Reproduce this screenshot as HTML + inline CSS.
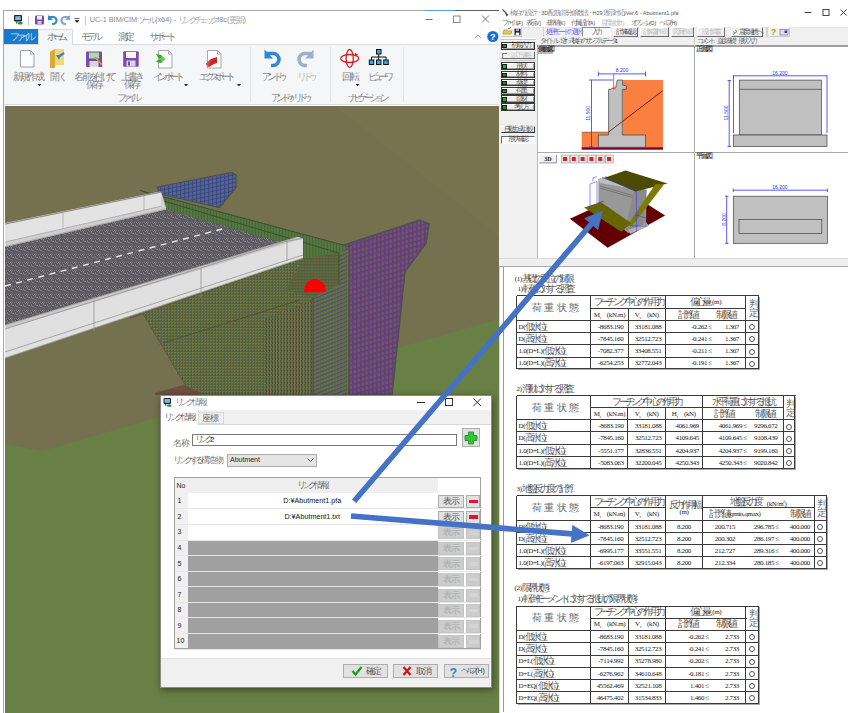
<!DOCTYPE html><html><head><meta charset="utf-8"><style>
*{box-sizing:border-box}
html,body{margin:0;padding:0}
body{width:850px;height:713px;position:relative;overflow:hidden;background:#fff;font-family:"Liberation Sans",sans-serif}
.a{position:absolute}
.t{position:absolute;white-space:nowrap}
.t i{display:inline-block;text-align:center;font-style:normal;vertical-align:top;line-height:inherit;opacity:.7;letter-spacing:0;font-family:"Liberation Sans",sans-serif}
svg{position:absolute;left:0;top:0}
</style></head><body>
<div class="a" style="left:3px;top:10px;width:496px;height:703px;background:#fff;border-left:1px solid #a8a8a8;border-top:1px solid #a8a8a8"></div>
<div class="a" style="left:426px;top:10px;width:29px;height:1px;background:#5a9ae0"></div>
<div class="a" style="left:455px;top:10px;width:44px;height:1px;background:#606060"></div>
<div class="a" style="left:4px;top:29px;width:34.5px;height:14.5px;background:#1979ca"></div>
<div class="t" style="left:1.0px;width:40px;text-align:center;top:30.8px;line-height:11px;font-size:8px;color:#fff;"><i style="width:5.4px;font-size:9.5px">フ</i><i style="width:5.4px;font-size:9.5px">ァ</i><i style="width:5.4px;font-size:9.5px">イ</i><i style="width:5.4px;font-size:9.5px">ル</i></div>
<div class="a" style="left:38px;top:29px;width:35px;height:16px;background:#f5f6f7;border:1px solid #dadbdc;border-bottom:none"></div>
<div class="t" style="left:35.5px;width:40px;text-align:center;top:31.0px;line-height:11px;font-size:8px;color:#444;"><i style="width:5.9px;font-size:9.5px">ホ</i><i style="width:5.9px;font-size:9.5px">ー</i><i style="width:5.9px;font-size:9.5px">ム</i></div>
<div class="t" style="left:70.0px;width:40px;text-align:center;top:31.0px;line-height:11px;font-size:8px;color:#444;"><i style="width:5.9px;font-size:9.5px">モ</i><i style="width:5.9px;font-size:9.5px">デ</i><i style="width:5.9px;font-size:9.5px">ル</i></div>
<div class="t" style="left:105.0px;width:40px;text-align:center;top:31.0px;line-height:11px;font-size:8px;color:#444;"><i style="width:7.3px;font-size:9.5px">測</i><i style="width:7.3px;font-size:9.5px">定</i></div>
<div class="t" style="left:136.0px;width:50px;text-align:center;top:31.0px;line-height:11px;font-size:8px;color:#444;"><i style="width:5.9px;font-size:9.5px">サ</i><i style="width:5.9px;font-size:9.5px">ポ</i><i style="width:5.9px;font-size:9.5px">ー</i><i style="width:5.9px;font-size:9.5px">ト</i></div>
<div class="a" style="left:4px;top:44px;width:495px;height:61px;background:#f5f6f7;border-top:1px solid #dadbdc;border-bottom:1px solid #dadbdc"></div>
<div class="a" style="left:39px;top:44px;width:33px;height:1px;background:#f5f6f7"></div>
<div class="a" style="left:250px;top:47px;width:1px;height:55px;background:#e2e3e5"></div>
<div class="a" style="left:330px;top:47px;width:1px;height:55px;background:#e2e3e5"></div>
<div class="a" style="left:403px;top:47px;width:1px;height:55px;background:#e2e3e5"></div>
<div class="t" style="left:-7.8px;width:70px;text-align:center;top:70.5px;line-height:11px;font-size:8px;color:#555;"><i style="width:7.3px;font-size:9.5px">新</i><i style="width:7.3px;font-size:9.5px">規</i><i style="width:7.3px;font-size:9.5px">作</i><i style="width:7.3px;font-size:9.5px">成</i></div>
<div class="t" style="left:21.6px;width:70px;text-align:center;top:70.5px;line-height:11px;font-size:8px;color:#555;"><i style="width:7.3px;font-size:9.5px">開</i><i style="width:5.4px;font-size:9.5px">く</i></div>
<div class="t" style="left:58.5px;width:70px;text-align:center;top:70.5px;line-height:11px;font-size:8px;color:#555;"><i style="width:7.3px;font-size:9.5px">名</i><i style="width:7.3px;font-size:9.5px">前</i><i style="width:5.4px;font-size:9.5px">を</i><i style="width:7.3px;font-size:9.5px">付</i><i style="width:5.4px;font-size:9.5px">け</i><i style="width:5.4px;font-size:9.5px">て</i></div>
<div class="t" style="left:95.8px;width:70px;text-align:center;top:70.5px;line-height:11px;font-size:8px;color:#555;"><i style="width:7.3px;font-size:9.5px">上</i><i style="width:7.3px;font-size:9.5px">書</i><i style="width:5.4px;font-size:9.5px">き</i></div>
<div class="t" style="left:131.5px;width:70px;text-align:center;top:70.5px;line-height:11px;font-size:8px;color:#555;"><i style="width:5.4px;font-size:9.5px">イ</i><i style="width:5.4px;font-size:9.5px">ン</i><i style="width:5.4px;font-size:9.5px">ポ</i><i style="width:5.4px;font-size:9.5px">ー</i><i style="width:5.4px;font-size:9.5px">ト</i></div>
<div class="t" style="left:180.4px;width:70px;text-align:center;top:70.5px;line-height:11px;font-size:8px;color:#555;"><i style="width:5.4px;font-size:9.5px">エ</i><i style="width:5.4px;font-size:9.5px">ク</i><i style="width:5.4px;font-size:9.5px">ス</i><i style="width:5.4px;font-size:9.5px">ポ</i><i style="width:5.4px;font-size:9.5px">ー</i><i style="width:5.4px;font-size:9.5px">ト</i></div>
<div class="t" style="left:237.8px;width:70px;text-align:center;top:70.5px;line-height:11px;font-size:8px;color:#555;"><i style="width:5.4px;font-size:9.5px">ア</i><i style="width:5.4px;font-size:9.5px">ン</i><i style="width:5.4px;font-size:9.5px">ド</i><i style="width:5.4px;font-size:9.5px">ゥ</i></div>
<div class="t" style="left:270.5px;width:70px;text-align:center;top:70.5px;line-height:11px;font-size:8px;color:#a8a8a8;"><i style="width:5.4px;font-size:9.5px">リ</i><i style="width:5.4px;font-size:9.5px">ド</i><i style="width:5.4px;font-size:9.5px">ゥ</i></div>
<div class="t" style="left:314.5px;width:70px;text-align:center;top:70.5px;line-height:11px;font-size:8px;color:#555;"><i style="width:7.3px;font-size:9.5px">回</i><i style="width:7.3px;font-size:9.5px">転</i></div>
<div class="t" style="left:343.6px;width:70px;text-align:center;top:70.5px;line-height:11px;font-size:8px;color:#555;"><i style="width:5.4px;font-size:9.5px">ビ</i><i style="width:5.4px;font-size:9.5px">ュ</i><i style="width:5.4px;font-size:9.5px">ー</i><i style="width:5.4px;font-size:9.5px">ワ</i></div>
<div class="t" style="left:73.5px;width:40px;text-align:center;top:79.1px;line-height:11px;font-size:8px;color:#555;"><i style="width:7.3px;font-size:9.5px">保</i><i style="width:7.3px;font-size:9.5px">存</i></div>
<div class="t" style="left:110.8px;width:40px;text-align:center;top:79.1px;line-height:11px;font-size:8px;color:#555;"><i style="width:7.3px;font-size:9.5px">保</i><i style="width:7.3px;font-size:9.5px">存</i></div>
<div class="t" style="left:97.0px;width:60px;text-align:center;top:91.8px;line-height:11px;font-size:8px;color:#666;"><i style="width:5.2px;font-size:9.5px">フ</i><i style="width:5.2px;font-size:9.5px">ァ</i><i style="width:5.2px;font-size:9.5px">イ</i><i style="width:5.2px;font-size:9.5px">ル</i></div>
<div class="t" style="left:249.2px;width:80px;text-align:center;top:91.8px;line-height:11px;font-size:8px;color:#666;"><i style="width:5px;font-size:9.5px">ア</i><i style="width:5px;font-size:9.5px">ン</i><i style="width:5px;font-size:9.5px">ド</i><i style="width:5px;font-size:9.5px">ゥ</i>/<i style="width:5px;font-size:9.5px">リ</i><i style="width:5px;font-size:9.5px">ド</i><i style="width:5px;font-size:9.5px">ゥ</i></div>
<div class="t" style="left:326.3px;width:80px;text-align:center;top:91.8px;line-height:11px;font-size:8px;color:#666;"><i style="width:5.35px;font-size:9.5px">ナ</i><i style="width:5.35px;font-size:9.5px">ビ</i><i style="width:5.35px;font-size:9.5px">ゲ</i><i style="width:5.35px;font-size:9.5px">ー</i><i style="width:5.35px;font-size:9.5px">シ</i><i style="width:5.35px;font-size:9.5px">ョ</i><i style="width:5.35px;font-size:9.5px">ン</i></div>
<div class="t" style="left:89.7px;top:15.2px;line-height:10.3px;font-size:7.3px;color:#888;">UC-1 BIM/CIM<i style="width:5.3px;font-size:9px">ツ</i><i style="width:5.3px;font-size:9px">ー</i><i style="width:5.3px;font-size:9px">ル</i> (x64) - <i style="width:5.3px;font-size:9px">リ</i><i style="width:5.3px;font-size:9px">ン</i><i style="width:5.3px;font-size:9px">ク</i><i style="width:5.3px;font-size:9px">チ</i><i style="width:5.3px;font-size:9px">ェ</i><i style="width:5.3px;font-size:9px">ッ</i><i style="width:5.3px;font-size:9px">ク</i>.f8c(<i style="width:7px;font-size:9px">更</i><i style="width:7px;font-size:9px">新</i>)</div>
<svg width="850" height="713" viewBox="0 0 850 713" style="z-index:1">
<g>
<rect x="14" y="15" width="8" height="6.5" rx="1" fill="#222"/><rect x="15.2" y="16.2" width="5.6" height="3.8" fill="#7fb5e8"/>
<rect x="16" y="21.5" width="1.5" height="2" fill="#555"/><rect x="18" y="22" width="4.5" height="2.5" rx="1" fill="#1a9a2a"/>
<rect x="28" y="16" width="1" height="9" fill="#c8c8c8"/>
<rect x="35" y="15.5" width="9" height="9" rx="1" fill="#7a4ab0"/><rect x="37" y="16" width="5" height="3.5" fill="#eee"/><rect x="37.5" y="21" width="4" height="3" fill="#ccc"/>
<path d="M49 17 h4 a3.5 3.5 0 0 1 0 7 h-1" stroke="#2a8ad8" stroke-width="2.2" fill="none"/><path d="M48 15 v5 h5z" fill="#2a8ad8"/>
<path d="M69 17 h-4 a3.5 3.5 0 0 0 0 7 h1" stroke="#8aa4c8" stroke-width="2.2" fill="none"/><path d="M70 15 v5 h-5z" fill="#8aa4c8"/>
<path d="M74.5 18.5 h5" stroke="#333" stroke-width=".8"/><path d="M74.5 20 h5 l-2.5 3z" fill="#333"/>
<rect x="85" y="16" width="1" height="9" fill="#c8c8c8"/>
<path d="M425.5 19.5 h7" stroke="#777" stroke-width="1"/>
<rect x="453.5" y="16" width="6.5" height="6.5" fill="none" stroke="#888" stroke-width="1"/>
<path d="M482 15.5 l7 7 M489 15.5 l-7 7" stroke="#777" stroke-width="1"/>
<path d="M475 38 l3 -3 l3 3" stroke="#999" stroke-width="1" fill="none"/>
<circle cx="492.8" cy="36.5" r="5.6" fill="#1a6fcf"/><text x="492.8" y="40" font-size="9" font-weight="bold" fill="#fff" text-anchor="middle" font-family="Liberation Sans">?</text>
</g>
<g>
<path d="M20.5 50.5 h10 l3.5 3.5 v13 h-13.5z" fill="#fcfcfc" stroke="#a0a0a0"/><path d="M30.5 50.5 v3.5 h3.5" fill="none" stroke="#a0a0a0"/>
<path d="M50 52 l5 -3 v16 l-5 3z" fill="#e8c35a"/><path d="M55 49 h9 v16 h-9z" fill="#f3d77a"/><path d="M50 52 l5-3 v19 l-5 0z" fill="#d9a93a"/>
<path d="M64 53 l-6 4" stroke="#2a8ad8" stroke-width="2.2"/><path d="M56 55 l3 5 l2 -5z" fill="#2a8ad8"/>
<rect x="86" y="51.5" width="16" height="15.5" rx="1" fill="#7a4ab0"/><rect x="89" y="52.5" width="10" height="6" fill="#a8e0a0"/><rect x="89.5" y="61" width="9" height="6" fill="#d8d8d8"/><path d="M95 57 l7 8" stroke="#c89a40" stroke-width="1.6"/><path d="M101.5 64.5 l1 2.5 l-2.3 -1z" fill="#e33"/>
<rect x="123.2" y="51.2" width="15.5" height="15.5" rx="1" fill="#7a4ab0"/><rect x="126" y="52" width="10" height="6" fill="#f4f4f4"/><rect x="126.5" y="60.5" width="9" height="6" fill="#d8d8d8"/><rect x="128" y="61.5" width="2" height="4" fill="#7a4ab0"/>
<path d="M158.5 50.5 h10 l3.5 3.5 v14 h-13.5z" fill="#fcfcfc" stroke="#a8a8a8"/><path d="M168.5 50.5 v3.5 h3.5" fill="none" stroke="#a8a8a8"/>
<path d="M156 54 l5 1 l4 4 l-4 4 l-5 -1 l3 -3z" fill="#3aa03a"/><path d="M161 55 l4 4 l-4 4 v-3 h-3 v-2 h3z" fill="#6acb4a"/>
<path d="M207.5 50.5 h10 l3.5 3.5 v14 h-13.5z" fill="#fcfcfc" stroke="#a8a8a8"/><path d="M217.5 50.5 v3.5 h3.5" fill="none" stroke="#a8a8a8"/>
<path d="M217 57 l-6 2 l-5 5 l3 3 l5 -3 l3 -1z" fill="#c82828"/><path d="M211 59 l-5 5 l3 3 z" fill="#e04040"/>
<path d="M267 53.5 h6 a6 6 0 0 1 0 12 h-2" stroke="#2a8ad8" stroke-width="3.6" fill="none"/><path d="M264.5 49.5 v9 h8.5z" fill="#2a8ad8"/>
<path d="M311 53.5 h-6 a6 6 0 0 0 0 12 h2" stroke="#9ab0cc" stroke-width="3.6" fill="none"/><path d="M313.5 49.5 v9 h-8.5z" fill="#9ab0cc"/>
<ellipse cx="349.7" cy="58.5" rx="9" ry="4" fill="none" stroke="#d82020" stroke-width="1.3"/><ellipse cx="349.7" cy="58.5" rx="3.6" ry="9" fill="none" stroke="#d82020" stroke-width="1.3"/><path d="M355 53 l3 1.5 l-3 2z" fill="#d82020"/>
<rect x="376.5" y="49.5" width="4.5" height="4.5" fill="#3aa8e8" stroke="#111" stroke-width="1"/>
<path d="M378.7 54 v3 M371.5 60 v-3 h14.5 v3 M378.7 57 v3" stroke="#111" stroke-width="1" fill="none"/>
<rect x="369.3" y="60" width="4.5" height="4.5" fill="#3aa8e8" stroke="#111" stroke-width="1"/><rect x="376.5" y="60" width="4.5" height="4.5" fill="#3aa8e8" stroke="#111" stroke-width="1"/><rect x="383.7" y="60" width="4.5" height="4.5" fill="#3aa8e8" stroke="#111" stroke-width="1"/>
<path d="M37.5 84 h4 l-2 2.2z M184 84 h4 l-2 2.2z M237 84 h4 l-2 2.2z M355.5 84 h4 l-2 2.2z" fill="#222"/>
</g></svg>
<svg width="850" height="713" viewBox="0 0 850 713"><defs>
<clipPath id="vc"><rect x="5" y="106" width="494" height="607"/></clipPath>
<pattern id="gB" width="4" height="4" patternUnits="userSpaceOnUse" patternTransform="skewY(-12)"><rect width="4" height="4" fill="#4f6a78"/><path d="M0 0H4M0 0V4" stroke="#3a3a98" stroke-width="1.3"/></pattern>
<pattern id="gG" width="3" height="4" patternUnits="userSpaceOnUse" patternTransform="skewY(15)"><rect width="3" height="4" fill="#53773f"/><path d="M0 0V4" stroke="#3e5a30" stroke-width="1"/></pattern>
<pattern id="gF" width="3" height="3" patternUnits="userSpaceOnUse"><rect width="3" height="3" fill="#5c663e"/><rect x="0" width="1" height="3" fill="#767243"/><rect x="1" y="1" width="1" height="1" fill="#5c8a3c"/><rect x="2" y="2" width="1" height="1" fill="#4e5450"/><rect x="0" y="0" width="3" height=".6" fill="#525a3a"/></pattern>
<pattern id="gR" width="3" height="4" patternUnits="userSpaceOnUse"><rect width="3" height="4" fill="#56603c"/><rect x="0" width="1" height="4" fill="#777243"/><rect x="1" y="1" width="1.5" height="1" fill="#a03844"/><rect x="2" y="2" width="1" height="2" fill="#474b4c"/><rect x="1" y="3" width="1" height="1" fill="#5a7a3a"/></pattern>
<pattern id="gS" width="3" height="4" patternUnits="userSpaceOnUse" patternTransform="skewY(-22)"><rect width="3" height="4" fill="#4f7a3c"/><path d="M0 1.5H3" stroke="#6a3a86" stroke-width="1.3"/><rect x="0" y="2.5" width="1" height="1.5" fill="#7a7040"/></pattern>
<pattern id="gP" width="4" height="5" patternUnits="userSpaceOnUse" patternTransform="skewY(-16)"><rect width="4" height="5" fill="#5f6442"/><path d="M0 0.7H4M0.7 0V5" stroke="#67398a" stroke-width="1.5"/><rect x="2" y="2" width="1" height="1" fill="#8a4068"/></pattern>
<pattern id="asph" width="8" height="8" patternUnits="userSpaceOnUse"><rect width="8" height="8" fill="#615d65"/><rect x="0" y="0" width="1" height="1" fill="#4f4c53"/><rect x="1" y="0" width="1" height="1" fill="#555259"/><rect x="3" y="0" width="1" height="1" fill="#77737b"/><rect x="7" y="0" width="1" height="1" fill="#817d85"/><rect x="4" y="1" width="1" height="1" fill="#817d85"/><rect x="5" y="1" width="1" height="1" fill="#817d85"/><rect x="7" y="1" width="1" height="1" fill="#77737b"/><rect x="0" y="2" width="1" height="1" fill="#817d85"/><rect x="1" y="2" width="1" height="1" fill="#77737b"/><rect x="3" y="2" width="1" height="1" fill="#555259"/><rect x="3" y="3" width="1" height="1" fill="#77737b"/><rect x="5" y="3" width="1" height="1" fill="#555259"/><rect x="5" y="4" width="1" height="1" fill="#555259"/><rect x="3" y="5" width="1" height="1" fill="#6e6a72"/><rect x="0" y="6" width="1" height="1" fill="#817d85"/><rect x="1" y="6" width="1" height="1" fill="#4f4c53"/><rect x="2" y="6" width="1" height="1" fill="#817d85"/><rect x="4" y="6" width="1" height="1" fill="#77737b"/><rect x="6" y="6" width="1" height="1" fill="#6e6a72"/><rect x="1" y="7" width="1" height="1" fill="#817d85"/><rect x="3" y="7" width="1" height="1" fill="#817d85"/><rect x="7" y="7" width="1" height="1" fill="#4f4c53"/></pattern>
<pattern id="gFt" width="3" height="3" patternUnits="userSpaceOnUse"><rect width="3" height="3" fill="#6a5242"/><path d="M0 0H3" stroke="#8a3a38" stroke-width=".8"/></pattern>
<pattern id="gT" width="3" height="3" patternUnits="userSpaceOnUse"><rect width="3" height="3" fill="#566b3e"/><path d="M0 0H3" stroke="#46553a" stroke-width=".8"/><rect x="1" y="1" width="1" height="1" fill="#8a4048"/></pattern>
</defs><g clip-path="url(#vc)"><polygon points="5,106 499,106 499,713 5,713" fill="#75714e" /><polygon points="335,106 499,106 499,236" fill="#77734f" /><polygon points="5,444 42,451 499,319 499,713 5,713" fill="#688046" /><polygon points="157,187 232,172.5 236,175 236,187.5 219.5,207.5 160,194" fill="url(#gB)" stroke="#4f4f4f" stroke-width="1.2"/><polygon points="130,318 303,258 313,300 313,395 190,395 155,393.3 185.2,385 143.1,314" fill="url(#gF)" stroke="#55583e" stroke-width=".8"/><path d="M163 343 L300 300" stroke="#4a4f38" stroke-width=".8"/><path d="M160 312 V345" stroke="#5050a0" stroke-width="1" stroke-dasharray="1.5 2.5"/><polygon points="155,393.3 185.2,385.5 200,392 200,395 155,395" fill="url(#gFt)" /><polygon points="265,318 313,300 313,395 265,395" fill="url(#gR)" /><polygon points="140,190 345,245 350,248 339,253 339,285 313,298 303,258 166,209.5" fill="url(#gG)" /><path d="M140 190.5 L345 245.5 M150 197 L339 253" stroke="#3f4a35" stroke-width=".9" fill="none"/><polygon points="286,290 303,258 339,253 339,285 313,298" fill="url(#gT)" /><polygon points="313,298 339,285 339,253 350,247 350,395 313,395" fill="url(#gS)" /><path d="M313 298 V395" stroke="#4a4a3a" stroke-width="1"/><path d="M347.5 250 V395" stroke="#6e6a48" stroke-width="1.2"/><path d="M339 253 V285" stroke="#3f4a35" stroke-width=".8"/><polygon points="344,245 420,220 429,224 426,243.5 405,271.5 392,395 349,395 349,247" fill="url(#gP)" stroke="#505050" stroke-width="1.5"/><polygon points="5,247 166,209.5 286,243.5 5,325" fill="url(#asph)" /><path d="M5 286 L226 228" stroke="#e8e8e8" stroke-width="1.4" stroke-dasharray="6 5.5"/><polygon points="5,223 160,191.5 161.5,193 166,207.5 166,209.5 5,247" fill="#cfcfcf" /><polygon points="5,225 161,193 161,206 5,241.7" fill="#e3e3e3" /><path d="M5 224 L161 192" stroke="#8c8c8c" stroke-width="1"/><path d="M5 242 L161 206.3" stroke="#a8a8a8" stroke-width=".8"/><path d="M5 246.5 L166 209" stroke="#9a9a9a" stroke-width=".7"/><path d="M63 213 V229 M144 196 V210" stroke="#a0a0a0" stroke-width=".6"/><polygon points="5,325 297,237 303,238.5 303,258 5,358" fill="#e0e0e0" /><polygon points="5,325 297,237 303,238.5 5,329" fill="#c9c9c9" /><path d="M5 325 L297 237 M5 329 L287 241 L303 238.5 M5 352 L303 255 M287 241 V261 M94 300 V331 M201 268 V298" stroke="#8a8a8a" stroke-width=".7" fill="none"/><path d="M5 358 L303 258" stroke="#9a9a9a" stroke-width=".8"/><path d="M304 292 A11 13 0 0 1 326 292 Z" fill="#f00"/><path d="M305 293 h20" stroke="#e02020" stroke-width="1.2" stroke-dasharray="1.5 1.5"/></g></svg>
<div class="a" style="left:499px;top:0px;width:351px;height:713px;background:#fff"></div>
<div class="a" style="left:499px;top:37px;width:1px;height:676px;background:#d8d8d8"></div>
<div class="t" style="left:509.5px;top:8.6px;line-height:8.5px;font-size:5.5px;color:#555;"><i style="width:5.3px;font-size:7px">橋</i><i style="width:5.3px;font-size:7px">台</i><i style="width:5.3px;font-size:7px">の</i><i style="width:5.3px;font-size:7px">設</i><i style="width:5.3px;font-size:7px">計</i><i style="width:5.3px;font-size:7px">・</i>3D<i style="width:5.3px;font-size:7px">配</i><i style="width:5.3px;font-size:7px">筋</i>(<i style="width:5.3px;font-size:7px">部</i><i style="width:5.3px;font-size:7px">分</i><i style="width:5.3px;font-size:7px">係</i><i style="width:5.3px;font-size:7px">数</i><i style="width:5.3px;font-size:7px">法</i><i style="width:5.3px;font-size:7px">・</i>H29<i style="width:5.3px;font-size:7px">道</i><i style="width:5.3px;font-size:7px">示</i><i style="width:5.3px;font-size:7px">対</i><i style="width:5.3px;font-size:7px">応</i>)Ver.6 - Abutment1.pfa</div>
<div class="t" style="left:501.8px;top:18.5px;line-height:8px;font-size:5px;color:#444;"><i style="width:3.7px;font-size:6.5px">フ</i><i style="width:3.7px;font-size:6.5px">ァ</i><i style="width:3.7px;font-size:6.5px">イ</i><i style="width:3.7px;font-size:6.5px">ル</i>(F)</div>
<div class="t" style="left:525.7px;top:18.5px;line-height:8px;font-size:5px;color:#444;"><i style="width:4.3px;font-size:6.5px">表</i><i style="width:4.3px;font-size:6.5px">示</i>(V)</div>
<div class="t" style="left:545.8px;top:18.5px;line-height:8px;font-size:5px;color:#444;"><i style="width:4.3px;font-size:6.5px">基</i><i style="width:4.3px;font-size:6.5px">準</i><i style="width:4.3px;font-size:6.5px">値</i>(K)</div>
<div class="t" style="left:571.2px;top:18.5px;line-height:8px;font-size:5px;color:#444;"><i style="width:4.3px;font-size:6.5px">付</i><i style="width:4.3px;font-size:6.5px">属</i><i style="width:4.3px;font-size:6.5px">設</i><i style="width:4.3px;font-size:6.5px">計</i>(A)</div>
<div class="t" style="left:600.9px;top:18.5px;line-height:8px;font-size:5px;color:#aaa;"><i style="width:4.3px;font-size:6.5px">震</i><i style="width:4.3px;font-size:6.5px">度</i><i style="width:4.3px;font-size:6.5px">連</i><i style="width:4.3px;font-size:6.5px">携</i>(T)</div>
<div class="t" style="left:630.5px;top:18.5px;line-height:8px;font-size:5px;color:#444;"><i style="width:3.7px;font-size:6.5px">オ</i><i style="width:3.7px;font-size:6.5px">プ</i><i style="width:3.7px;font-size:6.5px">シ</i><i style="width:3.7px;font-size:6.5px">ョ</i><i style="width:3.7px;font-size:6.5px">ン</i>(O)</div>
<div class="t" style="left:659px;top:18.5px;line-height:8px;font-size:5px;color:#444;"><i style="width:3.7px;font-size:6.5px">ヘ</i><i style="width:3.7px;font-size:6.5px">ル</i><i style="width:3.7px;font-size:6.5px">プ</i>(H)</div>
<div class="a" style="left:499px;top:26.5px;width:349px;height:10.5px;background:#f0f0f0;border-top:1px solid #e6e6e6"></div>
<div class="a" style="left:501px;top:27.3px;width:21px;height:9.4px;border:1px solid #fff;border-right-color:#c8c8c8;border-bottom-color:#c8c8c8"></div>
<div class="a" style="left:542.5px;top:27.3px;width:1.5px;height:9.4px;background:#d4d4d4"></div>
<div class="t" style="left:545.5px;top:27.8px;line-height:8.5px;font-size:5.5px;color:#2a2af0;"><i style="width:4.4px;font-size:6.5px">処</i><i style="width:4.4px;font-size:6.5px">理</i><i style="width:4.4px;font-size:6.5px">モ</i><i style="width:4.4px;font-size:6.5px">ー</i><i style="width:4.4px;font-size:6.5px">ド</i><i style="width:4.4px;font-size:6.5px">の</i><i style="width:4.4px;font-size:6.5px">選</i><i style="width:4.4px;font-size:6.5px">択</i></div>
<div class="a" style="left:581.8px;top:27.3px;width:29px;height:9.4px;background:#fafafa;border:1px solid #8a8a8a;border-right-color:#fff;border-bottom-color:#fff"></div>
<div class="t" style="left:581.2px;width:30px;text-align:center;top:28.0px;line-height:8.5px;font-size:5.5px;color:#222;"><i style="width:4.6px;font-size:6.5px">入</i><i style="width:4.6px;font-size:6.5px">力</i></div>
<div class="a" style="left:612.5px;top:27.3px;width:25.5px;height:9.4px;background:#f0f0f0;border:1px solid #fff;border-right-color:#6a6a6a;border-bottom-color:#6a6a6a"></div>
<div class="t" style="left:605.2px;width:40px;text-align:center;top:28.0px;line-height:8.5px;font-size:5.5px;color:#111;"><i style="width:4.6px;font-size:6.5px">計</i><i style="width:4.6px;font-size:6.5px">算</i><i style="width:4.6px;font-size:6.5px">確</i><i style="width:4.6px;font-size:6.5px">認</i></div>
<div class="a" style="left:639.5px;top:27.3px;width:29.5px;height:9.4px;background:#f0f0f0;border:1px solid #fff;border-right-color:#6a6a6a;border-bottom-color:#6a6a6a"></div>
<div class="t" style="left:634.2px;width:40px;text-align:center;top:28.0px;line-height:8.5px;font-size:5.5px;color:#b0b0b0;"><i style="width:4.6px;font-size:6.5px">計</i><i style="width:4.6px;font-size:6.5px">算</i><i style="width:4.6px;font-size:6.5px">書</i><i style="width:4.6px;font-size:6.5px">作</i><i style="width:4.6px;font-size:6.5px">成</i></div>
<div class="a" style="left:670.6px;top:27.3px;width:23.399999999999977px;height:9.4px;background:#f0f0f0;border:1px solid #fff;border-right-color:#6a6a6a;border-bottom-color:#6a6a6a"></div>
<div class="t" style="left:662.3px;width:40px;text-align:center;top:28.0px;line-height:8.5px;font-size:5.5px;color:#b0b0b0;"><i style="width:4.6px;font-size:6.5px">図</i><i style="width:4.6px;font-size:6.5px">面</i><i style="width:4.6px;font-size:6.5px">作</i><i style="width:4.6px;font-size:6.5px">成</i></div>
<div class="a" style="left:696.5px;top:27.3px;width:28.5px;height:9.4px;background:#f0f0f0;border:1px solid #fff;border-right-color:#6a6a6a;border-bottom-color:#6a6a6a"></div>
<div class="t" style="left:690.8px;width:40px;text-align:center;top:28.0px;line-height:8.5px;font-size:5.5px;color:#b0b0b0;"><i style="width:4.6px;font-size:6.5px">設</i><i style="width:4.6px;font-size:6.5px">計</i><i style="width:4.6px;font-size:6.5px">調</i><i style="width:4.6px;font-size:6.5px">書</i></div>
<div class="a" style="left:730.6px;top:27.3px;width:32.89999999999998px;height:9.4px;background:#f0f0f0;border:1px solid #fff;border-right-color:#6a6a6a;border-bottom-color:#6a6a6a"></div>
<div class="t" style="left:730.0px;width:40px;text-align:center;top:28.0px;line-height:8.5px;font-size:5.5px;color:#222;"><i style="width:4.6px;font-size:6.5px">震</i><i style="width:4.6px;font-size:6.5px">度</i><i style="width:4.6px;font-size:6.5px">連</i><i style="width:4.6px;font-size:6.5px">携</i><i style="width:4.6px;font-size:6.5px">へ</i></div>
<div class="a" style="left:766px;top:27.3px;width:1.5px;height:9.4px;background:#d4d4d4"></div>
<div class="a" style="left:769px;top:27.3px;width:21px;height:9.4px;border:1px solid #fff;border-right-color:#c8c8c8;border-bottom-color:#c8c8c8"></div>
<div class="a" style="left:499px;top:37px;width:37.5px;height:221px;background:#f0f0f0"></div>
<div class="a" style="left:499.5px;top:38px;width:36px;height:2px;border-top:1px solid #fff;border-bottom:1px solid #c8c8c8"></div>
<div class="a" style="left:499.5px;top:60px;width:36px;height:1px;background:#c8c8c8"></div>
<div class="a" style="left:500.5px;top:41.7px;width:34.2px;height:7.899999999999994px;background:#f0f0f0;border:1px solid #3a3a3a;box-shadow:inset 1px 1px 0 #fff, inset -1px -1px 0 #a0a0a0"></div>
<div class="a" style="left:502.3px;top:43.7px;width:4.6px;height:4.6px;background:#0a0;border:1px solid #1a1a1a"></div>
<div class="t" style="left:505.5px;width:30px;text-align:center;top:41.2px;line-height:8.5px;font-size:5.5px;color:#222;"><i style="width:4.6px;font-size:6.5px">初</i><i style="width:4.6px;font-size:6.5px">期</i><i style="width:4.6px;font-size:6.5px">入</i><i style="width:4.6px;font-size:6.5px">力</i></div>
<div class="a" style="left:500.5px;top:51px;width:34.2px;height:7.900000000000001px;background:#f0f0f0;border:1px solid #fafafa;border-right-color:#6a6a6a;border-bottom-color:#6a6a6a"></div>
<div class="a" style="left:502.3px;top:53px;width:4.6px;height:4.6px;border-left:1px solid #777;border-top:1px solid #777"></div>
<div class="t" style="left:505.5px;width:30px;text-align:center;top:50.5px;line-height:8.5px;font-size:5.5px;color:#b4b4b4;"><i style="width:4.6px;font-size:6.5px">以</i><i style="width:4.6px;font-size:6.5px">下</i><i style="width:4.6px;font-size:6.5px">省</i><i style="width:4.6px;font-size:6.5px">略</i></div>
<div class="a" style="left:500.5px;top:62px;width:34.2px;height:7.8px;background:#f0f0f0;border:1px solid #3a3a3a;box-shadow:inset 1px 1px 0 #fff, inset -1px -1px 0 #a0a0a0"></div>
<div class="a" style="left:502.3px;top:64px;width:4.6px;height:4.6px;background:#0c0;border:1px solid #1a1a1a"></div>
<div class="t" style="left:505.5px;width:30px;text-align:center;top:61.5px;line-height:8.5px;font-size:5.5px;color:#222;"><i style="width:4.6px;font-size:6.5px">形</i><i style="width:4.6px;font-size:6.5px">状</i></div>
<div class="a" style="left:500.5px;top:70.7px;width:34.2px;height:7.500000000000003px;background:#f0f0f0;border:1px solid #3a3a3a;box-shadow:inset 1px 1px 0 #fff, inset -1px -1px 0 #a0a0a0"></div>
<div class="a" style="left:502.3px;top:72.7px;width:4.6px;height:4.6px;background:#0a0;border:1px solid #1a1a1a"></div>
<div class="t" style="left:505.5px;width:30px;text-align:center;top:70.1px;line-height:8.5px;font-size:5.5px;color:#222;"><i style="width:4.6px;font-size:6.5px">材</i><i style="width:4.6px;font-size:6.5px">料</i></div>
<div class="a" style="left:500.5px;top:78.6px;width:34.2px;height:7.7000000000000055px;background:#f0f0f0;border:1px solid #3a3a3a;box-shadow:inset 1px 1px 0 #fff, inset -1px -1px 0 #a0a0a0"></div>
<div class="a" style="left:502.3px;top:80.6px;width:4.6px;height:4.6px;background:#0a0;border:1px solid #1a1a1a"></div>
<div class="t" style="left:505.5px;width:30px;text-align:center;top:78.0px;line-height:8.5px;font-size:5.5px;color:#222;"><i style="width:4.6px;font-size:6.5px">基</i><i style="width:4.6px;font-size:6.5px">礎</i></div>
<div class="a" style="left:500.5px;top:86.7px;width:34.2px;height:7.899999999999994px;background:#f0f0f0;border:1px solid #3a3a3a;box-shadow:inset 1px 1px 0 #fff, inset -1px -1px 0 #a0a0a0"></div>
<div class="a" style="left:502.3px;top:88.7px;width:4.6px;height:4.6px;background:#0a0;border:1px solid #1a1a1a"></div>
<div class="t" style="left:505.5px;width:30px;text-align:center;top:86.2px;line-height:8.5px;font-size:5.5px;color:#222;"><i style="width:4.6px;font-size:6.5px">荷</i><i style="width:4.6px;font-size:6.5px">重</i></div>
<div class="a" style="left:500.5px;top:95px;width:34.2px;height:7.899999999999994px;background:#f0f0f0;border:1px solid #3a3a3a;box-shadow:inset 1px 1px 0 #fff, inset -1px -1px 0 #a0a0a0"></div>
<div class="a" style="left:502.3px;top:97px;width:4.6px;height:4.6px;background:#0c0;border:1px solid #1a1a1a"></div>
<div class="t" style="left:505.5px;width:30px;text-align:center;top:94.5px;line-height:8.5px;font-size:5.5px;color:#222;"><i style="width:4.6px;font-size:6.5px">部</i><i style="width:4.6px;font-size:6.5px">材</i></div>
<div class="a" style="left:500.5px;top:103.3px;width:34.2px;height:8.000000000000004px;background:#f0f0f0;border:1px solid #3a3a3a;box-shadow:inset 1px 1px 0 #fff, inset -1px -1px 0 #a0a0a0"></div>
<div class="a" style="left:502.3px;top:105.3px;width:4.6px;height:4.6px;background:#0a0;border:1px solid #1a1a1a"></div>
<div class="t" style="left:505.5px;width:30px;text-align:center;top:102.9px;line-height:8.5px;font-size:5.5px;color:#222;"><i style="width:4.6px;font-size:6.5px">考</i><i style="width:4.6px;font-size:6.5px">え</i><i style="width:4.6px;font-size:6.5px">方</i></div>
<div class="a" style="left:500.5px;top:126px;width:34.2px;height:7px;background:#f0f0f0;border:1px solid #fafafa;border-right-color:#3a3a3a;border-bottom-color:#3a3a3a"></div>
<div class="t" style="left:497.6px;width:40px;text-align:center;top:125.2px;line-height:8.5px;font-size:5.5px;color:#222;"><i style="width:4.4px;font-size:6.5px">自</i><i style="width:4.4px;font-size:6.5px">動</i><i style="width:4.4px;font-size:6.5px">生</i><i style="width:4.4px;font-size:6.5px">成</i>/<i style="width:4.4px;font-size:6.5px">比</i><i style="width:4.4px;font-size:6.5px">較</i></div>
<div class="a" style="left:500.5px;top:135.7px;width:34.2px;height:8px;background:#fafafa;border:1px solid #6a6a6a;border-right-color:#fff;border-bottom-color:#fff"></div>
<div class="t" style="left:497.6px;width:40px;text-align:center;top:135.4px;line-height:8.5px;font-size:5.5px;color:#222;"><i style="width:4.6px;font-size:6.5px">形</i><i style="width:4.6px;font-size:6.5px">状</i><i style="width:4.6px;font-size:6.5px">確</i><i style="width:4.6px;font-size:6.5px">認</i></div>
<div class="a" style="left:536.5px;top:37px;width:311.5px;height:8.5px;background:#f0f0f0"></div>
<div class="a" style="left:536.5px;top:45.3px;width:311.5px;height:1.7px;background:#a0a0a0"></div>
<div class="a" style="left:694px;top:37px;width:1px;height:8.5px;background:#ccc"></div>
<div class="t" style="left:539.7px;top:37.2px;line-height:8.5px;font-size:5.5px;color:#333;"><i style="width:4.3px;font-size:6.5px">タ</i><i style="width:4.3px;font-size:6.5px">イ</i><i style="width:4.3px;font-size:6.5px">ト</i><i style="width:4.3px;font-size:6.5px">ル</i>: <i style="width:4.3px;font-size:6.5px">逆</i>T<i style="width:4.3px;font-size:6.5px">式</i><i style="width:4.3px;font-size:6.5px">橋</i><i style="width:4.3px;font-size:6.5px">台</i><i style="width:4.3px;font-size:6.5px">の</i><i style="width:4.3px;font-size:6.5px">サ</i><i style="width:4.3px;font-size:6.5px">ン</i><i style="width:4.3px;font-size:6.5px">プ</i><i style="width:4.3px;font-size:6.5px">ル</i><i style="width:4.3px;font-size:6.5px">デ</i><i style="width:4.3px;font-size:6.5px">ー</i><i style="width:4.3px;font-size:6.5px">タ</i>1</div>
<div class="t" style="left:696.5px;top:37.2px;line-height:8.5px;font-size:5.5px;color:#333;"><i style="width:4.3px;font-size:6.5px">コ</i><i style="width:4.3px;font-size:6.5px">メ</i><i style="width:4.3px;font-size:6.5px">ン</i><i style="width:4.3px;font-size:6.5px">ト</i>: <i style="width:4.5px;font-size:6.5px">直</i><i style="width:4.5px;font-size:6.5px">接</i><i style="width:4.5px;font-size:6.5px">基</i><i style="width:4.5px;font-size:6.5px">礎</i>, <i style="width:4.5px;font-size:6.5px">形</i><i style="width:4.5px;font-size:6.5px">状</i><i style="width:4.5px;font-size:6.5px">入</i><i style="width:4.5px;font-size:6.5px">力</i></div>
<svg width="850" height="713" viewBox="0 0 850 713">
<path d="M804.5 12.5 h7" stroke="#444" stroke-width="1"/>
<rect x="823" y="9.5" width="6" height="6" fill="none" stroke="#444" stroke-width="1"/>
<path d="M840.5 9.5 l6 6 M846.5 9.5 l-6 6" stroke="#444" stroke-width="1"/>
<path d="M502.5 9.5 l4 4" stroke="#556" stroke-width="1.2"/><path d="M505 12.5 l3.5 2 l-2 2z" fill="#2244aa"/>
<path d="M503 34 l1 -4 h3 l1 1 h4 l-1 3z" fill="#e8d040" stroke="#8a7a20" stroke-width=".5"/><path d="M508 29 l3 -1.5" stroke="#333" stroke-width=".6"/>
<rect x="514.5" y="28.8" width="6" height="6.5" fill="#222"/><rect x="516" y="28.8" width="3" height="2.3" fill="#9ad"/><rect x="515.8" y="32.6" width="3.4" height="2.7" fill="#fff"/>
<text x="773.5" y="35" font-size="9" font-weight="bold" fill="#b0a000" text-anchor="middle" font-family="Liberation Sans">?</text>
<rect x="780" y="29.5" width="8" height="5.5" fill="#dde" stroke="#667" stroke-width=".6"/><rect x="784.5" y="30.5" width="2.5" height="2.5" fill="#2244cc"/>
<path d="M733 31.5 l2 1.5 l-2 1.5 M735 30 l2 1.5 l-2 1.5" stroke="#2a9a2a" stroke-width=".8" fill="none"/>
</svg>
<div class="a" style="left:536.5px;top:47px;width:311.5px;height:211px;background:#fff;border-left:1px solid #b8b8b8"></div>
<div class="a" style="left:694px;top:47px;width:1.2px;height:211px;background:#aaa"></div>
<div class="a" style="left:536.5px;top:152.2px;width:311.5px;height:1.2px;background:#aaa"></div>
<div class="t" style="left:537.5px;top:45.2px;line-height:8.5px;font-size:5.5px;color:#000;font-weight:bold;background:#b8b8b8"><i style="width:5px;font-size:6.5px">側</i><i style="width:5px;font-size:6.5px">面</i><i style="width:5px;font-size:6.5px">図</i></div>
<div class="t" style="left:695.5px;top:45.2px;line-height:8.5px;font-size:5.5px;color:#000;font-weight:bold;"><i style="width:5px;font-size:6.5px">正</i><i style="width:5px;font-size:6.5px">面</i><i style="width:5px;font-size:6.5px">図</i></div>
<div class="t" style="left:695.5px;top:151.8px;line-height:8.5px;font-size:5.5px;color:#000;font-weight:bold;"><i style="width:5px;font-size:6.5px">平</i><i style="width:5px;font-size:6.5px">面</i><i style="width:5px;font-size:6.5px">図</i></div>
<div class="a" style="left:499px;top:258px;width:349px;height:8.5px;background:#efefef;border-top:1px solid #d9d9d9;border-bottom:1.5px solid #aaa"></div>
<div class="a" style="left:503.3px;top:266.5px;width:1px;height:445px;background:#9a9a9a"></div>
<svg width="850" height="713" viewBox="0 0 850 713">
<g>
<rect x="622.5" y="80" width="40.5" height="67.3" fill="#f98040"/>
<rect x="581.7" y="132.2" width="41" height="15.1" fill="#f98040"/>
<rect x="581.7" y="147.2" width="81.3" height="2.5" fill="#7a0030"/>
<path d="M617.3 80 h5.2 v5 l3.8 1 v3.3 h-4 v45.7 h23.2 v12.3 h-47.1 v-12.3 h10.2 v-45.7 h2.5 l1.2 -1.3 h3.3z" fill="#c0c0c0" stroke="#404040" stroke-width=".7"/>
<path d="M608.4 132.2 L662.6 90.8" stroke="#7a1010" stroke-width=".9"/>
<path d="M581.7 132.2 h26.7" stroke="#404040" stroke-width=".6"/>
<path d="M598.4 73.9 h47.1 M598.4 71.5 v4.8 M645.5 71.5 v4.8 M591.5 80 v67 M589 80 h24 M589 147 h4" stroke="#3030ff" stroke-width=".8" fill="none"/>
<path d="M613.7 74 v15" stroke="#f03030" stroke-width=".8"/><circle cx="613.7" cy="88.5" r="1" fill="#f03030"/>
<text x="622" y="71.5" font-size="5" fill="#3030ff" text-anchor="middle" font-family="Liberation Sans">8.200</text>
<text transform="translate(590,113.4) rotate(-90)" font-size="5" fill="#3030ff" text-anchor="middle" font-family="Liberation Sans">11.500</text>
</g>
<g>
<rect x="739.3" y="80.1" width="82.1" height="54.9" fill="#c0c0c0" stroke="#404040" stroke-width=".7"/>
<path d="M739.3 89.3 h82.1" stroke="#404040" stroke-width=".7"/>
<rect x="733.3" y="135" width="93.7" height="11.4" fill="#c0c0c0" stroke="#404040" stroke-width=".7"/>
<path d="M733.3 75.8 h93.7 M733.5 75 v58 M827 75 v58 M729.2 80.5 v66 M727.5 80.5 h3.5 M727.5 146.4 h3.5" stroke="#3030ff" stroke-width=".8" fill="none"/>
<text x="780" y="74.5" font-size="5" fill="#3030ff" text-anchor="middle" font-family="Liberation Sans">16.200</text>
<text transform="translate(728,113) rotate(-90)" font-size="5" fill="#3030ff" text-anchor="middle" font-family="Liberation Sans">11.500</text>
</g>
<g>
<rect x="733.3" y="196.2" width="94.1" height="47.1" fill="#c0c0c0" stroke="#404040" stroke-width=".7"/>
<rect x="739" y="219.4" width="82.8" height="14.1" fill="#c0c0c0" stroke="#404040" stroke-width=".7"/>
<path d="M733.3 190.2 h94.1 M733.3 188.5 v3.5 M827.4 188.5 v3.5 M726.7 196.2 v47.1 M725 196.2 h3.5 M725 243.3 h3.5" stroke="#3030ff" stroke-width=".8" fill="none"/>
<text x="780" y="189" font-size="5" fill="#3030ff" text-anchor="middle" font-family="Liberation Sans">16.200</text>
<text transform="translate(725.5,219.5) rotate(-90)" font-size="5" fill="#3030ff" text-anchor="middle" font-family="Liberation Sans">8.200</text>
</g>
<g>
<rect x="539.1" y="154.8" width="17.5" height="8.1" fill="#f0f0f0" stroke="#fff" stroke-width=".6"/><path d="M539.1 162.9 h17.5 v-8.1" stroke="#777" stroke-width=".8" fill="none"/>
<text x="547.8" y="161.3" font-size="6" font-weight="bold" fill="#111" text-anchor="middle" font-family="Liberation Serif">3D</text>
<rect x="561.4" y="155" width="8" height="8" fill="#e8e8e8" stroke="#888" stroke-width=".5"/><path d="M563.0 157 h4 v4 h-4z" fill="#e02020"/><rect x="570.2" y="155" width="8" height="8" fill="#e8e8e8" stroke="#888" stroke-width=".5"/><path d="M571.8 157 h4 v4 h-4z" fill="#e02020"/><rect x="579.0" y="155" width="8" height="8" fill="#e8e8e8" stroke="#888" stroke-width=".5"/><path d="M580.6 157 h4 v4 h-4z" fill="#e02020"/><rect x="587.8" y="155" width="8" height="8" fill="#e8e8e8" stroke="#888" stroke-width=".5"/><path d="M589.4 157 h4 v4 h-4z" fill="#e02020"/><rect x="596.6" y="155" width="8" height="8" fill="#e8e8e8" stroke="#888" stroke-width=".5"/><path d="M598.2 157 h4 v4 h-4z" fill="#e02020"/><rect x="605.4" y="155" width="8" height="8" fill="#e8e8e8" stroke="#888" stroke-width=".5"/><path d="M607.0 157 h4 v4 h-4z" fill="#e02020"/>
<path d="M569.9 218.7 L628 192 L665.1 215.6 L607.6 247.8z" fill="#640000"/>
<path d="M598.4 179 L606 176.5 L646.5 189.7 L646 226 L628 233 L598.4 205z" fill="#989898"/><path d="M628 228 L646 222 L649 226 L630 234z" fill="#b0b0b0"/>
<path d="M598.4 179 L606 176.5 L646.5 189.7 L634.2 189.1 L600 183z" fill="#bdbdbd"/>
<path d="M600 186 L634 196 M600 188 L634 198" stroke="#6e6e6e" stroke-width=".8"/>
<path d="M634.2 189.1 L646.5 189.7 L644 224.3 L625 231z" fill="#8a8a8a"/>
<path d="M603.9 178 L625.5 170.6 L667.5 183.5 L635.4 191.5z" fill="#4a4a00"/>
<path d="M655.5 184 L664 184.5 L632 226 L627 226z" fill="#7c7c04"/>
<path d="M584.1 207.6 L600.8 202 L629.2 221.8 L631 223.5 L621.2 231.7z" fill="#666604"/>
<path d="M590 207 V184 l7 -2.5 v22 M593 181 v-3 l4 -1.5 M602 177.5 L636 190 M636.5 190 V232 M630 226 h16 v-8 l-10 -3 M604 201 l-6 2" stroke="#3434e8" stroke-width=".55" fill="none"/>
</g>
</svg>
<div class="t" style="left:514.8px;top:275.0px;line-height:8px;font-size:7px;color:#222;font-family:'Liberation Serif',serif;letter-spacing:-0.35px">(1)<i style="width:6.2px;font-size:9.5px">基</i><i style="width:6.2px;font-size:9.5px">礎</i><i style="width:6.2px;font-size:9.5px">の</i><i style="width:6.2px;font-size:9.5px">変</i><i style="width:6.2px;font-size:9.5px">位</i><i style="width:6.2px;font-size:9.5px">の</i><i style="width:6.2px;font-size:9.5px">制</i><i style="width:6.2px;font-size:9.5px">限</i></div>
<div class="t" style="left:517.6px;top:284.8px;line-height:8px;font-size:7px;color:#222;font-family:'Liberation Serif',serif;letter-spacing:-0.35px">1)<i style="width:6.2px;font-size:9.5px">転</i><i style="width:6.2px;font-size:9.5px">倒</i><i style="width:6.2px;font-size:9.5px">に</i><i style="width:6.2px;font-size:9.5px">対</i><i style="width:6.2px;font-size:9.5px">す</i><i style="width:6.2px;font-size:9.5px">る</i><i style="width:6.2px;font-size:9.5px">照</i><i style="width:6.2px;font-size:9.5px">査</i></div>
<div class="a" style="left:516.5px;top:295.4px;width:242.60000000000002px;height:1px;background:#3a3a3a"></div>
<div class="a" style="left:516.5px;top:368.3px;width:242.60000000000002px;height:1px;background:#3a3a3a"></div>
<div class="a" style="left:516.5px;top:320.1px;width:242.60000000000002px;height:1px;background:#3a3a3a"></div>
<div class="a" style="left:516.5px;top:332.3px;width:242.60000000000002px;height:1px;background:#3a3a3a"></div>
<div class="a" style="left:516.5px;top:344.3px;width:242.60000000000002px;height:1px;background:#3a3a3a"></div>
<div class="a" style="left:516.5px;top:356.5px;width:242.60000000000002px;height:1px;background:#3a3a3a"></div>
<div class="a" style="left:590.6px;top:307.9px;width:155.79999999999995px;height:1px;background:#3a3a3a"></div>
<div class="a" style="left:516.0px;top:295.9px;width:1px;height:73.40000000000003px;background:#3a3a3a"></div>
<div class="a" style="left:590.1px;top:295.9px;width:1px;height:73.40000000000003px;background:#3a3a3a"></div>
<div class="a" style="left:627.7px;top:308.4px;width:1px;height:60.900000000000034px;background:#3a3a3a"></div>
<div class="a" style="left:664.9px;top:295.9px;width:1px;height:73.40000000000003px;background:#3a3a3a"></div>
<div class="a" style="left:744.9px;top:295.9px;width:1px;height:73.40000000000003px;background:#3a3a3a"></div>
<div class="a" style="left:757.6px;top:295.9px;width:1px;height:73.40000000000003px;background:#3a3a3a"></div>
<div class="a" style="left:517.5px;top:369.3px;width:242.10000000000002px;height:1px;background:#aaa"></div>
<div class="a" style="left:758.6px;top:296.9px;width:1px;height:73.40000000000003px;background:#aaa"></div>
<div class="t" style="left:518.5px;width:70px;text-align:center;top:304.2px;line-height:8px;font-size:7px;color:#222;font-family:'Liberation Serif',serif;letter-spacing:-0.35px"><i style="width:6.2px;font-size:9.5px">荷</i><i style="width:6.2px;font-size:9.5px">　</i><i style="width:6.2px;font-size:9.5px">重</i><i style="width:6.2px;font-size:9.5px">　</i><i style="width:6.2px;font-size:9.5px">状</i><i style="width:6.2px;font-size:9.5px">　</i><i style="width:6.2px;font-size:9.5px">態</i></div>
<div class="t" style="left:588.0px;width:80px;text-align:center;top:298.1px;line-height:8px;font-size:7px;color:#222;font-family:'Liberation Serif',serif;letter-spacing:-0.35px"><i style="width:6.2px;font-size:9.5px">フ</i><i style="width:6.2px;font-size:9.5px">ー</i><i style="width:6.2px;font-size:9.5px">チ</i><i style="width:6.2px;font-size:9.5px">ン</i><i style="width:6.2px;font-size:9.5px">グ</i><i style="width:6.2px;font-size:9.5px">中</i><i style="width:6.2px;font-size:9.5px">心</i><i style="width:6.2px;font-size:9.5px">の</i><i style="width:6.2px;font-size:9.5px">作</i><i style="width:6.2px;font-size:9.5px">用</i><i style="width:6.2px;font-size:9.5px">力</i></div>
<div class="t" style="left:589.4px;width:40px;text-align:center;top:310.5px;line-height:8px;font-size:7px;color:#222;font-family:'Liberation Serif',serif;letter-spacing:-0.35px">M<sub style="font-size:3px">x</sub><i style="width:6.2px;font-size:9.5px">　</i>(kN.m)</div>
<div class="t" style="left:626.8px;width:40px;text-align:center;top:310.5px;line-height:8px;font-size:7px;color:#222;font-family:'Liberation Serif',serif;letter-spacing:-0.35px">V<sub style="font-size:3px">x</sub><i style="width:6.2px;font-size:9.5px">　</i>(kN)</div>
<div class="t" style="left:665.4px;width:80px;text-align:center;top:298.2px;line-height:8px;font-size:7px;color:#222;font-family:'Liberation Serif',serif;letter-spacing:-0.35px"><i style="width:6.2px;font-size:9.5px">偏</i><i style="width:6.2px;font-size:9.5px">心</i><i style="width:6.2px;font-size:9.5px">量</i>e<sub style="font-size:3px">x</sub>(m)</div>
<div class="t" style="left:672.0px;width:30px;text-align:center;top:310.5px;line-height:8px;font-size:7px;color:#222;font-family:'Liberation Serif',serif;letter-spacing:-0.35px"><i style="width:6.2px;font-size:9.5px">計</i><i style="width:6.2px;font-size:9.5px">算</i><i style="width:6.2px;font-size:9.5px">値</i></div>
<div class="t" style="left:710.0px;width:30px;text-align:center;top:310.5px;line-height:8px;font-size:7px;color:#222;font-family:'Liberation Serif',serif;letter-spacing:-0.35px"><i style="width:6.2px;font-size:9.5px">制</i><i style="width:6.2px;font-size:9.5px">限</i><i style="width:6.2px;font-size:9.5px">値</i></div>
<div class="t" style="left:745.8px;width:12px;text-align:center;top:300.0px;line-height:8px;font-size:7px;color:#222;font-family:'Liberation Serif',serif;letter-spacing:-0.35px"><i style="width:6.2px;font-size:9.5px">判</i></div>
<div class="t" style="left:745.8px;width:12px;text-align:center;top:308.5px;line-height:8px;font-size:7px;color:#222;font-family:'Liberation Serif',serif;letter-spacing:-0.35px"><i style="width:6.2px;font-size:9.5px">定</i></div>
<div class="t" style="left:518.6px;top:323.0px;line-height:8px;font-size:7px;color:#222;font-family:'Liberation Serif',serif;letter-spacing:-0.35px">D(<i style="width:6.2px;font-size:9.5px">低</i><i style="width:6.2px;font-size:9.5px">水</i><i style="width:6.2px;font-size:9.5px">位</i>)</div>
<div class="t" style="left:583.3px;width:40px;text-align:right;top:323.00000000000006px;line-height:8px;font-size:7px;color:#222;font-family:'Liberation Serif',serif;letter-spacing:-0.35px">-8683.190</div>
<div class="t" style="left:621.3px;width:40px;text-align:right;top:323.00000000000006px;line-height:8px;font-size:7px;color:#222;font-family:'Liberation Serif',serif;letter-spacing:-0.35px">33181.088</div>
<div class="t" style="left:672px;width:40px;text-align:right;top:323.00000000000006px;line-height:8px;font-size:7px;color:#222;font-family:'Liberation Serif',serif;letter-spacing:-0.35px">-0.262 &#x2264;</div>
<div class="t" style="left:709px;width:30px;text-align:right;top:323.00000000000006px;line-height:8px;font-size:7px;color:#222;font-family:'Liberation Serif',serif;letter-spacing:-0.35px">1.367</div>
<div class="t" style="left:745.8px;width:12px;text-align:center;top:323.0px;line-height:8px;font-size:7px;color:#222;font-family:'Liberation Serif',serif;letter-spacing:-0.35px"><b style="display:inline-block;width:6px;height:6px;border:0.7px solid #555;border-radius:50%;vertical-align:middle"></b></div>
<div class="t" style="left:518.6px;top:335.1px;line-height:8px;font-size:7px;color:#222;font-family:'Liberation Serif',serif;letter-spacing:-0.35px">D(<i style="width:6.2px;font-size:9.5px">高</i><i style="width:6.2px;font-size:9.5px">水</i><i style="width:6.2px;font-size:9.5px">位</i>)</div>
<div class="t" style="left:583.3px;width:40px;text-align:right;top:335.1px;line-height:8px;font-size:7px;color:#222;font-family:'Liberation Serif',serif;letter-spacing:-0.35px">-7845.160</div>
<div class="t" style="left:621.3px;width:40px;text-align:right;top:335.1px;line-height:8px;font-size:7px;color:#222;font-family:'Liberation Serif',serif;letter-spacing:-0.35px">32512.723</div>
<div class="t" style="left:672px;width:40px;text-align:right;top:335.1px;line-height:8px;font-size:7px;color:#222;font-family:'Liberation Serif',serif;letter-spacing:-0.35px">-0.241 &#x2264;</div>
<div class="t" style="left:709px;width:30px;text-align:right;top:335.1px;line-height:8px;font-size:7px;color:#222;font-family:'Liberation Serif',serif;letter-spacing:-0.35px">1.367</div>
<div class="t" style="left:745.8px;width:12px;text-align:center;top:335.1px;line-height:8px;font-size:7px;color:#222;font-family:'Liberation Serif',serif;letter-spacing:-0.35px"><b style="display:inline-block;width:6px;height:6px;border:0.7px solid #555;border-radius:50%;vertical-align:middle"></b></div>
<div class="t" style="left:518.6px;top:347.2px;line-height:8px;font-size:7px;color:#222;font-family:'Liberation Serif',serif;letter-spacing:-0.35px">1.0(D+L)(<i style="width:6.2px;font-size:9.5px">低</i><i style="width:6.2px;font-size:9.5px">水</i><i style="width:6.2px;font-size:9.5px">位</i>)</div>
<div class="t" style="left:583.3px;width:40px;text-align:right;top:347.2px;line-height:8px;font-size:7px;color:#222;font-family:'Liberation Serif',serif;letter-spacing:-0.35px">-7082.377</div>
<div class="t" style="left:621.3px;width:40px;text-align:right;top:347.2px;line-height:8px;font-size:7px;color:#222;font-family:'Liberation Serif',serif;letter-spacing:-0.35px">33408.551</div>
<div class="t" style="left:672px;width:40px;text-align:right;top:347.2px;line-height:8px;font-size:7px;color:#222;font-family:'Liberation Serif',serif;letter-spacing:-0.35px">-0.211 &#x2264;</div>
<div class="t" style="left:709px;width:30px;text-align:right;top:347.2px;line-height:8px;font-size:7px;color:#222;font-family:'Liberation Serif',serif;letter-spacing:-0.35px">1.367</div>
<div class="t" style="left:745.8px;width:12px;text-align:center;top:347.2px;line-height:8px;font-size:7px;color:#222;font-family:'Liberation Serif',serif;letter-spacing:-0.35px"><b style="display:inline-block;width:6px;height:6px;border:0.7px solid #555;border-radius:50%;vertical-align:middle"></b></div>
<div class="t" style="left:518.6px;top:359.2px;line-height:8px;font-size:7px;color:#222;font-family:'Liberation Serif',serif;letter-spacing:-0.35px">1.0(D+L)(<i style="width:6.2px;font-size:9.5px">高</i><i style="width:6.2px;font-size:9.5px">水</i><i style="width:6.2px;font-size:9.5px">位</i>)</div>
<div class="t" style="left:583.3px;width:40px;text-align:right;top:359.2px;line-height:8px;font-size:7px;color:#222;font-family:'Liberation Serif',serif;letter-spacing:-0.35px">-6254.253</div>
<div class="t" style="left:621.3px;width:40px;text-align:right;top:359.2px;line-height:8px;font-size:7px;color:#222;font-family:'Liberation Serif',serif;letter-spacing:-0.35px">32772.043</div>
<div class="t" style="left:672px;width:40px;text-align:right;top:359.2px;line-height:8px;font-size:7px;color:#222;font-family:'Liberation Serif',serif;letter-spacing:-0.35px">-0.191 &#x2264;</div>
<div class="t" style="left:709px;width:30px;text-align:right;top:359.2px;line-height:8px;font-size:7px;color:#222;font-family:'Liberation Serif',serif;letter-spacing:-0.35px">1.367</div>
<div class="t" style="left:745.8px;width:12px;text-align:center;top:359.2px;line-height:8px;font-size:7px;color:#222;font-family:'Liberation Serif',serif;letter-spacing:-0.35px"><b style="display:inline-block;width:6px;height:6px;border:0.7px solid #555;border-radius:50%;vertical-align:middle"></b></div>
<div class="t" style="left:516.5px;top:384.5px;line-height:8px;font-size:7px;color:#222;font-family:'Liberation Serif',serif;letter-spacing:-0.35px">2)<i style="width:6.2px;font-size:9.5px">滑</i><i style="width:6.2px;font-size:9.5px">動</i><i style="width:6.2px;font-size:9.5px">に</i><i style="width:6.2px;font-size:9.5px">対</i><i style="width:6.2px;font-size:9.5px">す</i><i style="width:6.2px;font-size:9.5px">る</i><i style="width:6.2px;font-size:9.5px">照</i><i style="width:6.2px;font-size:9.5px">査</i></div>
<div class="a" style="left:516.5px;top:395.2px;width:279.29999999999995px;height:1px;background:#3a3a3a"></div>
<div class="a" style="left:516.5px;top:467.9px;width:279.29999999999995px;height:1px;background:#3a3a3a"></div>
<div class="a" style="left:516.5px;top:419.3px;width:279.29999999999995px;height:1px;background:#3a3a3a"></div>
<div class="a" style="left:516.5px;top:431.4px;width:279.29999999999995px;height:1px;background:#3a3a3a"></div>
<div class="a" style="left:516.5px;top:443.8px;width:279.29999999999995px;height:1px;background:#3a3a3a"></div>
<div class="a" style="left:516.5px;top:456.0px;width:279.29999999999995px;height:1px;background:#3a3a3a"></div>
<div class="a" style="left:590.9px;top:407.1px;width:193.30000000000007px;height:1px;background:#3a3a3a"></div>
<div class="a" style="left:516.0px;top:395.7px;width:1px;height:73.19999999999999px;background:#3a3a3a"></div>
<div class="a" style="left:590.4px;top:395.7px;width:1px;height:73.19999999999999px;background:#3a3a3a"></div>
<div class="a" style="left:627.4px;top:407.6px;width:1px;height:61.299999999999955px;background:#3a3a3a"></div>
<div class="a" style="left:664.9px;top:407.6px;width:1px;height:61.299999999999955px;background:#3a3a3a"></div>
<div class="a" style="left:701.7px;top:395.7px;width:1px;height:73.19999999999999px;background:#3a3a3a"></div>
<div class="a" style="left:782.7px;top:395.7px;width:1px;height:73.19999999999999px;background:#3a3a3a"></div>
<div class="a" style="left:794.3px;top:395.7px;width:1px;height:73.19999999999999px;background:#3a3a3a"></div>
<div class="a" style="left:517.5px;top:468.9px;width:278.79999999999995px;height:1px;background:#aaa"></div>
<div class="a" style="left:795.3px;top:396.7px;width:1px;height:73.19999999999999px;background:#aaa"></div>
<div class="t" style="left:518.7px;width:70px;text-align:center;top:403.7px;line-height:8px;font-size:7px;color:#222;font-family:'Liberation Serif',serif;letter-spacing:-0.35px"><i style="width:6.2px;font-size:9.5px">荷</i><i style="width:6.2px;font-size:9.5px">　</i><i style="width:6.2px;font-size:9.5px">重</i><i style="width:6.2px;font-size:9.5px">　</i><i style="width:6.2px;font-size:9.5px">状</i><i style="width:6.2px;font-size:9.5px">　</i><i style="width:6.2px;font-size:9.5px">態</i></div>
<div class="t" style="left:601.5px;width:90px;text-align:center;top:397.6px;line-height:8px;font-size:7px;color:#222;font-family:'Liberation Serif',serif;letter-spacing:-0.35px"><i style="width:6.2px;font-size:9.5px">フ</i><i style="width:6.2px;font-size:9.5px">ー</i><i style="width:6.2px;font-size:9.5px">チ</i><i style="width:6.2px;font-size:9.5px">ン</i><i style="width:6.2px;font-size:9.5px">グ</i><i style="width:6.2px;font-size:9.5px">中</i><i style="width:6.2px;font-size:9.5px">心</i><i style="width:6.2px;font-size:9.5px">の</i><i style="width:6.2px;font-size:9.5px">作</i><i style="width:6.2px;font-size:9.5px">用</i><i style="width:6.2px;font-size:9.5px">力</i></div>
<div class="t" style="left:589.4px;width:40px;text-align:center;top:409.7px;line-height:8px;font-size:7px;color:#222;font-family:'Liberation Serif',serif;letter-spacing:-0.35px">M<sub style="font-size:3px">x</sub><i style="width:6.2px;font-size:9.5px">　</i>(kN.m)</div>
<div class="t" style="left:626.6px;width:40px;text-align:center;top:409.7px;line-height:8px;font-size:7px;color:#222;font-family:'Liberation Serif',serif;letter-spacing:-0.35px">V<sub style="font-size:3px">x</sub><i style="width:6.2px;font-size:9.5px">　</i>(kN)</div>
<div class="t" style="left:663.8px;width:40px;text-align:center;top:409.7px;line-height:8px;font-size:7px;color:#222;font-family:'Liberation Serif',serif;letter-spacing:-0.35px">H<sub style="font-size:3px">x</sub><i style="width:6.2px;font-size:9.5px">　</i>(kN)</div>
<div class="t" style="left:702.7px;width:80px;text-align:center;top:397.6px;line-height:8px;font-size:7px;color:#222;font-family:'Liberation Serif',serif;letter-spacing:-0.35px"><i style="width:6.2px;font-size:9.5px">水</i><i style="width:6.2px;font-size:9.5px">平</i><i style="width:6.2px;font-size:9.5px">荷</i><i style="width:6.2px;font-size:9.5px">重</i><i style="width:6.2px;font-size:9.5px">に</i><i style="width:6.2px;font-size:9.5px">対</i><i style="width:6.2px;font-size:9.5px">す</i><i style="width:6.2px;font-size:9.5px">る</i><i style="width:6.2px;font-size:9.5px">抵</i><i style="width:6.2px;font-size:9.5px">抗</i></div>
<div class="t" style="left:708.0px;width:30px;text-align:center;top:409.7px;line-height:8px;font-size:7px;color:#222;font-family:'Liberation Serif',serif;letter-spacing:-0.35px"><i style="width:6.2px;font-size:9.5px">計</i><i style="width:6.2px;font-size:9.5px">算</i><i style="width:6.2px;font-size:9.5px">値</i></div>
<div class="t" style="left:749.0px;width:30px;text-align:center;top:409.7px;line-height:8px;font-size:7px;color:#222;font-family:'Liberation Serif',serif;letter-spacing:-0.35px"><i style="width:6.2px;font-size:9.5px">制</i><i style="width:6.2px;font-size:9.5px">限</i><i style="width:6.2px;font-size:9.5px">値</i></div>
<div class="t" style="left:783.0px;width:12px;text-align:center;top:400.0px;line-height:8px;font-size:7px;color:#222;font-family:'Liberation Serif',serif;letter-spacing:-0.35px"><i style="width:6.2px;font-size:9.5px">判</i></div>
<div class="t" style="left:783.0px;width:12px;text-align:center;top:408.5px;line-height:8px;font-size:7px;color:#222;font-family:'Liberation Serif',serif;letter-spacing:-0.35px"><i style="width:6.2px;font-size:9.5px">定</i></div>
<div class="t" style="left:518.6px;top:422.2px;line-height:8px;font-size:7px;color:#222;font-family:'Liberation Serif',serif;letter-spacing:-0.35px">D(<i style="width:6.2px;font-size:9.5px">低</i><i style="width:6.2px;font-size:9.5px">水</i><i style="width:6.2px;font-size:9.5px">位</i>)</div>
<div class="t" style="left:583.6px;width:40px;text-align:right;top:422.15000000000003px;line-height:8px;font-size:7px;color:#222;font-family:'Liberation Serif',serif;letter-spacing:-0.35px">-8683.190</div>
<div class="t" style="left:621.5px;width:40px;text-align:right;top:422.15000000000003px;line-height:8px;font-size:7px;color:#222;font-family:'Liberation Serif',serif;letter-spacing:-0.35px">33181.088</div>
<div class="t" style="left:659px;width:40px;text-align:right;top:422.15000000000003px;line-height:8px;font-size:7px;color:#222;font-family:'Liberation Serif',serif;letter-spacing:-0.35px">4061.969</div>
<div class="t" style="left:707px;width:40px;text-align:right;top:422.15000000000003px;line-height:8px;font-size:7px;color:#222;font-family:'Liberation Serif',serif;letter-spacing:-0.35px">4061.969 &#x2264;</div>
<div class="t" style="left:747.5px;width:30px;text-align:right;top:422.15000000000003px;line-height:8px;font-size:7px;color:#222;font-family:'Liberation Serif',serif;letter-spacing:-0.35px">9296.672</div>
<div class="t" style="left:783.0px;width:12px;text-align:center;top:422.2px;line-height:8px;font-size:7px;color:#222;font-family:'Liberation Serif',serif;letter-spacing:-0.35px"><b style="display:inline-block;width:6px;height:6px;border:0.7px solid #555;border-radius:50%;vertical-align:middle"></b></div>
<div class="t" style="left:518.6px;top:434.4px;line-height:8px;font-size:7px;color:#222;font-family:'Liberation Serif',serif;letter-spacing:-0.35px">D(<i style="width:6.2px;font-size:9.5px">高</i><i style="width:6.2px;font-size:9.5px">水</i><i style="width:6.2px;font-size:9.5px">位</i>)</div>
<div class="t" style="left:583.6px;width:40px;text-align:right;top:434.40000000000003px;line-height:8px;font-size:7px;color:#222;font-family:'Liberation Serif',serif;letter-spacing:-0.35px">-7845.160</div>
<div class="t" style="left:621.5px;width:40px;text-align:right;top:434.40000000000003px;line-height:8px;font-size:7px;color:#222;font-family:'Liberation Serif',serif;letter-spacing:-0.35px">32512.723</div>
<div class="t" style="left:659px;width:40px;text-align:right;top:434.40000000000003px;line-height:8px;font-size:7px;color:#222;font-family:'Liberation Serif',serif;letter-spacing:-0.35px">4109.645</div>
<div class="t" style="left:707px;width:40px;text-align:right;top:434.40000000000003px;line-height:8px;font-size:7px;color:#222;font-family:'Liberation Serif',serif;letter-spacing:-0.35px">4109.645 &#x2264;</div>
<div class="t" style="left:747.5px;width:30px;text-align:right;top:434.40000000000003px;line-height:8px;font-size:7px;color:#222;font-family:'Liberation Serif',serif;letter-spacing:-0.35px">9108.439</div>
<div class="t" style="left:783.0px;width:12px;text-align:center;top:434.4px;line-height:8px;font-size:7px;color:#222;font-family:'Liberation Serif',serif;letter-spacing:-0.35px"><b style="display:inline-block;width:6px;height:6px;border:0.7px solid #555;border-radius:50%;vertical-align:middle"></b></div>
<div class="t" style="left:518.6px;top:446.7px;line-height:8px;font-size:7px;color:#222;font-family:'Liberation Serif',serif;letter-spacing:-0.35px">1.0(D+L)(<i style="width:6.2px;font-size:9.5px">低</i><i style="width:6.2px;font-size:9.5px">水</i><i style="width:6.2px;font-size:9.5px">位</i>)</div>
<div class="t" style="left:583.6px;width:40px;text-align:right;top:446.7px;line-height:8px;font-size:7px;color:#222;font-family:'Liberation Serif',serif;letter-spacing:-0.35px">-5551.177</div>
<div class="t" style="left:621.5px;width:40px;text-align:right;top:446.7px;line-height:8px;font-size:7px;color:#222;font-family:'Liberation Serif',serif;letter-spacing:-0.35px">32836.551</div>
<div class="t" style="left:659px;width:40px;text-align:right;top:446.7px;line-height:8px;font-size:7px;color:#222;font-family:'Liberation Serif',serif;letter-spacing:-0.35px">4204.937</div>
<div class="t" style="left:707px;width:40px;text-align:right;top:446.7px;line-height:8px;font-size:7px;color:#222;font-family:'Liberation Serif',serif;letter-spacing:-0.35px">4204.937 &#x2264;</div>
<div class="t" style="left:747.5px;width:30px;text-align:right;top:446.7px;line-height:8px;font-size:7px;color:#222;font-family:'Liberation Serif',serif;letter-spacing:-0.35px">9199.160</div>
<div class="t" style="left:783.0px;width:12px;text-align:center;top:446.7px;line-height:8px;font-size:7px;color:#222;font-family:'Liberation Serif',serif;letter-spacing:-0.35px"><b style="display:inline-block;width:6px;height:6px;border:0.7px solid #555;border-radius:50%;vertical-align:middle"></b></div>
<div class="t" style="left:518.6px;top:458.8px;line-height:8px;font-size:7px;color:#222;font-family:'Liberation Serif',serif;letter-spacing:-0.35px">1.0(D+L)(<i style="width:6.2px;font-size:9.5px">高</i><i style="width:6.2px;font-size:9.5px">水</i><i style="width:6.2px;font-size:9.5px">位</i>)</div>
<div class="t" style="left:583.6px;width:40px;text-align:right;top:458.75px;line-height:8px;font-size:7px;color:#222;font-family:'Liberation Serif',serif;letter-spacing:-0.35px">-5083.063</div>
<div class="t" style="left:621.5px;width:40px;text-align:right;top:458.75px;line-height:8px;font-size:7px;color:#222;font-family:'Liberation Serif',serif;letter-spacing:-0.35px">32200.045</div>
<div class="t" style="left:659px;width:40px;text-align:right;top:458.75px;line-height:8px;font-size:7px;color:#222;font-family:'Liberation Serif',serif;letter-spacing:-0.35px">4250.343</div>
<div class="t" style="left:707px;width:40px;text-align:right;top:458.75px;line-height:8px;font-size:7px;color:#222;font-family:'Liberation Serif',serif;letter-spacing:-0.35px">4250.343 &#x2264;</div>
<div class="t" style="left:747.5px;width:30px;text-align:right;top:458.75px;line-height:8px;font-size:7px;color:#222;font-family:'Liberation Serif',serif;letter-spacing:-0.35px">9020.842</div>
<div class="t" style="left:783.0px;width:12px;text-align:center;top:458.8px;line-height:8px;font-size:7px;color:#222;font-family:'Liberation Serif',serif;letter-spacing:-0.35px"><b style="display:inline-block;width:6px;height:6px;border:0.7px solid #555;border-radius:50%;vertical-align:middle"></b></div>
<div class="t" style="left:516.5px;top:484.5px;line-height:8px;font-size:7px;color:#222;font-family:'Liberation Serif',serif;letter-spacing:-0.35px">3)<i style="width:6.2px;font-size:9.5px">地</i><i style="width:6.2px;font-size:9.5px">盤</i><i style="width:6.2px;font-size:9.5px">反</i><i style="width:6.2px;font-size:9.5px">力</i><i style="width:6.2px;font-size:9.5px">度</i><i style="width:6.2px;font-size:9.5px">の</i><i style="width:6.2px;font-size:9.5px">計</i><i style="width:6.2px;font-size:9.5px">算</i></div>
<div class="a" style="left:516.5px;top:495.1px;width:310.5px;height:1px;background:#3a3a3a"></div>
<div class="a" style="left:516.5px;top:567.9px;width:310.5px;height:1px;background:#3a3a3a"></div>
<div class="a" style="left:516.5px;top:519.5px;width:310.5px;height:1px;background:#3a3a3a"></div>
<div class="a" style="left:516.5px;top:531.9px;width:310.5px;height:1px;background:#3a3a3a"></div>
<div class="a" style="left:516.5px;top:543.9px;width:310.5px;height:1px;background:#3a3a3a"></div>
<div class="a" style="left:516.5px;top:555.9px;width:310.5px;height:1px;background:#3a3a3a"></div>
<div class="a" style="left:590.6px;top:507.1px;width:75.89999999999998px;height:1px;background:#3a3a3a"></div>
<div class="a" style="left:702.4px;top:507.1px;width:112.60000000000002px;height:1px;background:#3a3a3a"></div>
<div class="a" style="left:516.0px;top:495.6px;width:1px;height:73.29999999999995px;background:#3a3a3a"></div>
<div class="a" style="left:590.1px;top:495.6px;width:1px;height:73.29999999999995px;background:#3a3a3a"></div>
<div class="a" style="left:627.5px;top:507.6px;width:1px;height:61.299999999999955px;background:#3a3a3a"></div>
<div class="a" style="left:665.0px;top:495.6px;width:1px;height:73.29999999999995px;background:#3a3a3a"></div>
<div class="a" style="left:701.9px;top:495.6px;width:1px;height:73.29999999999995px;background:#3a3a3a"></div>
<div class="a" style="left:813.5px;top:495.6px;width:1px;height:73.29999999999995px;background:#3a3a3a"></div>
<div class="a" style="left:825.5px;top:495.6px;width:1px;height:73.29999999999995px;background:#3a3a3a"></div>
<div class="a" style="left:517.5px;top:568.9px;width:310.0px;height:1px;background:#aaa"></div>
<div class="a" style="left:826.5px;top:496.6px;width:1px;height:73.29999999999995px;background:#aaa"></div>
<div class="t" style="left:518.5px;width:70px;text-align:center;top:503.8px;line-height:8px;font-size:7px;color:#222;font-family:'Liberation Serif',serif;letter-spacing:-0.35px"><i style="width:6.2px;font-size:9.5px">荷</i><i style="width:6.2px;font-size:9.5px">　</i><i style="width:6.2px;font-size:9.5px">重</i><i style="width:6.2px;font-size:9.5px">　</i><i style="width:6.2px;font-size:9.5px">状</i><i style="width:6.2px;font-size:9.5px">　</i><i style="width:6.2px;font-size:9.5px">態</i></div>
<div class="t" style="left:588.0px;width:80px;text-align:center;top:497.6px;line-height:8px;font-size:7px;color:#222;font-family:'Liberation Serif',serif;letter-spacing:-0.35px"><i style="width:6.2px;font-size:9.5px">フ</i><i style="width:6.2px;font-size:9.5px">ー</i><i style="width:6.2px;font-size:9.5px">チ</i><i style="width:6.2px;font-size:9.5px">ン</i><i style="width:6.2px;font-size:9.5px">グ</i><i style="width:6.2px;font-size:9.5px">中</i><i style="width:6.2px;font-size:9.5px">心</i><i style="width:6.2px;font-size:9.5px">の</i><i style="width:6.2px;font-size:9.5px">作</i><i style="width:6.2px;font-size:9.5px">用</i><i style="width:6.2px;font-size:9.5px">力</i></div>
<div class="t" style="left:589.3px;width:40px;text-align:center;top:509.8px;line-height:8px;font-size:7px;color:#222;font-family:'Liberation Serif',serif;letter-spacing:-0.35px">M<sub style="font-size:3px">x</sub><i style="width:6.2px;font-size:9.5px">　</i>(kN.m)</div>
<div class="t" style="left:626.8px;width:40px;text-align:center;top:509.8px;line-height:8px;font-size:7px;color:#222;font-family:'Liberation Serif',serif;letter-spacing:-0.35px">V<sub style="font-size:3px">x</sub><i style="width:6.2px;font-size:9.5px">　</i>(kN)</div>
<div class="t" style="left:664.0px;width:40px;text-align:center;top:500.6px;line-height:8px;font-size:7px;color:#222;font-family:'Liberation Serif',serif;letter-spacing:-0.35px"><i style="width:6.2px;font-size:9.5px">反</i><i style="width:6.2px;font-size:9.5px">力</i><i style="width:6.2px;font-size:9.5px">作</i><i style="width:6.2px;font-size:9.5px">用</i><i style="width:6.2px;font-size:9.5px">幅</i></div>
<div class="t" style="left:664.0px;width:40px;text-align:center;top:507.5px;line-height:8px;font-size:7px;color:#222;font-family:'Liberation Serif',serif;letter-spacing:-0.35px">(m)</div>
<div class="t" style="left:713.0px;width:90px;text-align:center;top:497.6px;line-height:8px;font-size:7px;color:#222;font-family:'Liberation Serif',serif;letter-spacing:-0.35px"><i style="width:6.2px;font-size:9.5px">地</i><i style="width:6.2px;font-size:9.5px">盤</i><i style="width:6.2px;font-size:9.5px">反</i><i style="width:6.2px;font-size:9.5px">力</i><i style="width:6.2px;font-size:9.5px">度</i><i style="width:6.2px;font-size:9.5px">　</i>(kN/m<sup style="font-size:3px">2</sup>)</div>
<div class="t" style="left:700.0px;width:70px;text-align:center;top:509.8px;line-height:8px;font-size:7px;color:#222;font-family:'Liberation Serif',serif;letter-spacing:-0.35px"><i style="width:6.2px;font-size:9.5px">計</i><i style="width:6.2px;font-size:9.5px">算</i><i style="width:6.2px;font-size:9.5px">値</i>(qmin,qmax)</div>
<div class="t" style="left:784.0px;width:30px;text-align:center;top:509.8px;line-height:8px;font-size:7px;color:#222;font-family:'Liberation Serif',serif;letter-spacing:-0.35px"><i style="width:6.2px;font-size:9.5px">制</i><i style="width:6.2px;font-size:9.5px">限</i><i style="width:6.2px;font-size:9.5px">値</i></div>
<div class="t" style="left:814.0px;width:12px;text-align:center;top:500.0px;line-height:8px;font-size:7px;color:#222;font-family:'Liberation Serif',serif;letter-spacing:-0.35px"><i style="width:6.2px;font-size:9.5px">判</i></div>
<div class="t" style="left:814.0px;width:12px;text-align:center;top:508.5px;line-height:8px;font-size:7px;color:#222;font-family:'Liberation Serif',serif;letter-spacing:-0.35px"><i style="width:6.2px;font-size:9.5px">定</i></div>
<div class="t" style="left:518.6px;top:522.5px;line-height:8px;font-size:7px;color:#222;font-family:'Liberation Serif',serif;letter-spacing:-0.35px">D(<i style="width:6.2px;font-size:9.5px">低</i><i style="width:6.2px;font-size:9.5px">水</i><i style="width:6.2px;font-size:9.5px">位</i>)</div>
<div class="t" style="left:583.3px;width:40px;text-align:right;top:522.5px;line-height:8px;font-size:7px;color:#222;font-family:'Liberation Serif',serif;letter-spacing:-0.35px">-8683.190</div>
<div class="t" style="left:621.3px;width:40px;text-align:right;top:522.5px;line-height:8px;font-size:7px;color:#222;font-family:'Liberation Serif',serif;letter-spacing:-0.35px">33181.088</div>
<div class="t" style="left:669.0px;width:30px;text-align:center;top:522.5px;line-height:8px;font-size:7px;color:#222;font-family:'Liberation Serif',serif;letter-spacing:-0.35px">8.200</div>
<div class="t" style="left:710.0px;width:30px;text-align:center;top:522.5px;line-height:8px;font-size:7px;color:#222;font-family:'Liberation Serif',serif;letter-spacing:-0.35px">200.715</div>
<div class="t" style="left:739px;width:40px;text-align:right;top:522.5px;line-height:8px;font-size:7px;color:#222;font-family:'Liberation Serif',serif;letter-spacing:-0.35px">296.785 &#x2264;</div>
<div class="t" style="left:780px;width:30px;text-align:right;top:522.5px;line-height:8px;font-size:7px;color:#222;font-family:'Liberation Serif',serif;letter-spacing:-0.35px">400.000</div>
<div class="t" style="left:814.0px;width:12px;text-align:center;top:522.5px;line-height:8px;font-size:7px;color:#222;font-family:'Liberation Serif',serif;letter-spacing:-0.35px"><b style="display:inline-block;width:6px;height:6px;border:0.7px solid #555;border-radius:50%;vertical-align:middle"></b></div>
<div class="t" style="left:518.6px;top:534.7px;line-height:8px;font-size:7px;color:#222;font-family:'Liberation Serif',serif;letter-spacing:-0.35px">D(<i style="width:6.2px;font-size:9.5px">高</i><i style="width:6.2px;font-size:9.5px">水</i><i style="width:6.2px;font-size:9.5px">位</i>)</div>
<div class="t" style="left:583.3px;width:40px;text-align:right;top:534.6999999999999px;line-height:8px;font-size:7px;color:#222;font-family:'Liberation Serif',serif;letter-spacing:-0.35px">-7845.160</div>
<div class="t" style="left:621.3px;width:40px;text-align:right;top:534.6999999999999px;line-height:8px;font-size:7px;color:#222;font-family:'Liberation Serif',serif;letter-spacing:-0.35px">32512.723</div>
<div class="t" style="left:669.0px;width:30px;text-align:center;top:534.7px;line-height:8px;font-size:7px;color:#222;font-family:'Liberation Serif',serif;letter-spacing:-0.35px">8.200</div>
<div class="t" style="left:710.0px;width:30px;text-align:center;top:534.7px;line-height:8px;font-size:7px;color:#222;font-family:'Liberation Serif',serif;letter-spacing:-0.35px">200.302</div>
<div class="t" style="left:739px;width:40px;text-align:right;top:534.6999999999999px;line-height:8px;font-size:7px;color:#222;font-family:'Liberation Serif',serif;letter-spacing:-0.35px">286.197 &#x2264;</div>
<div class="t" style="left:780px;width:30px;text-align:right;top:534.6999999999999px;line-height:8px;font-size:7px;color:#222;font-family:'Liberation Serif',serif;letter-spacing:-0.35px">400.000</div>
<div class="t" style="left:814.0px;width:12px;text-align:center;top:534.7px;line-height:8px;font-size:7px;color:#222;font-family:'Liberation Serif',serif;letter-spacing:-0.35px"><b style="display:inline-block;width:6px;height:6px;border:0.7px solid #555;border-radius:50%;vertical-align:middle"></b></div>
<div class="t" style="left:518.6px;top:546.7px;line-height:8px;font-size:7px;color:#222;font-family:'Liberation Serif',serif;letter-spacing:-0.35px">1.0(D+L)(<i style="width:6.2px;font-size:9.5px">低</i><i style="width:6.2px;font-size:9.5px">水</i><i style="width:6.2px;font-size:9.5px">位</i>)</div>
<div class="t" style="left:583.3px;width:40px;text-align:right;top:546.6999999999999px;line-height:8px;font-size:7px;color:#222;font-family:'Liberation Serif',serif;letter-spacing:-0.35px">-6995.177</div>
<div class="t" style="left:621.3px;width:40px;text-align:right;top:546.6999999999999px;line-height:8px;font-size:7px;color:#222;font-family:'Liberation Serif',serif;letter-spacing:-0.35px">33551.551</div>
<div class="t" style="left:669.0px;width:30px;text-align:center;top:546.7px;line-height:8px;font-size:7px;color:#222;font-family:'Liberation Serif',serif;letter-spacing:-0.35px">8.200</div>
<div class="t" style="left:710.0px;width:30px;text-align:center;top:546.7px;line-height:8px;font-size:7px;color:#222;font-family:'Liberation Serif',serif;letter-spacing:-0.35px">212.727</div>
<div class="t" style="left:739px;width:40px;text-align:right;top:546.6999999999999px;line-height:8px;font-size:7px;color:#222;font-family:'Liberation Serif',serif;letter-spacing:-0.35px">289.316 &#x2264;</div>
<div class="t" style="left:780px;width:30px;text-align:right;top:546.6999999999999px;line-height:8px;font-size:7px;color:#222;font-family:'Liberation Serif',serif;letter-spacing:-0.35px">400.000</div>
<div class="t" style="left:814.0px;width:12px;text-align:center;top:546.7px;line-height:8px;font-size:7px;color:#222;font-family:'Liberation Serif',serif;letter-spacing:-0.35px"><b style="display:inline-block;width:6px;height:6px;border:0.7px solid #555;border-radius:50%;vertical-align:middle"></b></div>
<div class="t" style="left:518.6px;top:558.7px;line-height:8px;font-size:7px;color:#222;font-family:'Liberation Serif',serif;letter-spacing:-0.35px">1.0(D+L)(<i style="width:6.2px;font-size:9.5px">高</i><i style="width:6.2px;font-size:9.5px">水</i><i style="width:6.2px;font-size:9.5px">位</i>)</div>
<div class="t" style="left:583.3px;width:40px;text-align:right;top:558.6999999999999px;line-height:8px;font-size:7px;color:#222;font-family:'Liberation Serif',serif;letter-spacing:-0.35px">-6197.063</div>
<div class="t" style="left:621.3px;width:40px;text-align:right;top:558.6999999999999px;line-height:8px;font-size:7px;color:#222;font-family:'Liberation Serif',serif;letter-spacing:-0.35px">32915.043</div>
<div class="t" style="left:669.0px;width:30px;text-align:center;top:558.7px;line-height:8px;font-size:7px;color:#222;font-family:'Liberation Serif',serif;letter-spacing:-0.35px">8.200</div>
<div class="t" style="left:710.0px;width:30px;text-align:center;top:558.7px;line-height:8px;font-size:7px;color:#222;font-family:'Liberation Serif',serif;letter-spacing:-0.35px">212.334</div>
<div class="t" style="left:739px;width:40px;text-align:right;top:558.6999999999999px;line-height:8px;font-size:7px;color:#222;font-family:'Liberation Serif',serif;letter-spacing:-0.35px">280.185 &#x2264;</div>
<div class="t" style="left:780px;width:30px;text-align:right;top:558.6999999999999px;line-height:8px;font-size:7px;color:#222;font-family:'Liberation Serif',serif;letter-spacing:-0.35px">400.000</div>
<div class="t" style="left:814.0px;width:12px;text-align:center;top:558.7px;line-height:8px;font-size:7px;color:#222;font-family:'Liberation Serif',serif;letter-spacing:-0.35px"><b style="display:inline-block;width:6px;height:6px;border:0.7px solid #555;border-radius:50%;vertical-align:middle"></b></div>
<div class="t" style="left:514.6px;top:583.6px;line-height:8px;font-size:7px;color:#222;font-family:'Liberation Serif',serif;letter-spacing:-0.35px">(2)<i style="width:6.2px;font-size:9.5px">限</i><i style="width:6.2px;font-size:9.5px">界</i><i style="width:6.2px;font-size:9.5px">状</i><i style="width:6.2px;font-size:9.5px">態</i>1</div>
<div class="t" style="left:517.6px;top:595.0px;line-height:8px;font-size:7px;color:#222;font-family:'Liberation Serif',serif;letter-spacing:-0.35px">1)<i style="width:6.2px;font-size:9.5px">転</i><i style="width:6.2px;font-size:9.5px">倒</i><i style="width:6.2px;font-size:9.5px">モ</i><i style="width:6.2px;font-size:9.5px">ー</i><i style="width:6.2px;font-size:9.5px">メ</i><i style="width:6.2px;font-size:9.5px">ン</i><i style="width:6.2px;font-size:9.5px">ト</i><i style="width:6.2px;font-size:9.5px">に</i><i style="width:6.2px;font-size:9.5px">対</i><i style="width:6.2px;font-size:9.5px">す</i><i style="width:6.2px;font-size:9.5px">る</i><i style="width:6.2px;font-size:9.5px">抵</i><i style="width:6.2px;font-size:9.5px">抗</i><i style="width:6.2px;font-size:9.5px">の</i><i style="width:6.2px;font-size:9.5px">限</i><i style="width:6.2px;font-size:9.5px">界</i><i style="width:6.2px;font-size:9.5px">状</i><i style="width:6.2px;font-size:9.5px">態</i>1</div>
<div class="a" style="left:516.7px;top:605.5px;width:242.69999999999993px;height:1px;background:#3a3a3a"></div>
<div class="a" style="left:516.7px;top:703.4px;width:242.69999999999993px;height:1px;background:#3a3a3a"></div>
<div class="a" style="left:516.7px;top:630.0px;width:242.69999999999993px;height:1px;background:#3a3a3a"></div>
<div class="a" style="left:516.7px;top:642.2px;width:242.69999999999993px;height:1px;background:#3a3a3a"></div>
<div class="a" style="left:516.7px;top:654.5px;width:242.69999999999993px;height:1px;background:#3a3a3a"></div>
<div class="a" style="left:516.7px;top:666.7px;width:242.69999999999993px;height:1px;background:#3a3a3a"></div>
<div class="a" style="left:516.7px;top:678.9px;width:242.69999999999993px;height:1px;background:#3a3a3a"></div>
<div class="a" style="left:516.7px;top:691.2px;width:242.69999999999993px;height:1px;background:#3a3a3a"></div>
<div class="a" style="left:590.5px;top:617.7px;width:156.0px;height:1px;background:#3a3a3a"></div>
<div class="a" style="left:516.2px;top:606px;width:1px;height:98.39999999999998px;background:#3a3a3a"></div>
<div class="a" style="left:590.0px;top:606px;width:1px;height:98.39999999999998px;background:#3a3a3a"></div>
<div class="a" style="left:627.9px;top:618.2px;width:1px;height:86.19999999999993px;background:#3a3a3a"></div>
<div class="a" style="left:664.9px;top:606px;width:1px;height:98.39999999999998px;background:#3a3a3a"></div>
<div class="a" style="left:745.0px;top:606px;width:1px;height:98.39999999999998px;background:#3a3a3a"></div>
<div class="a" style="left:757.9px;top:606px;width:1px;height:98.39999999999998px;background:#3a3a3a"></div>
<div class="a" style="left:517.7px;top:704.4px;width:242.19999999999993px;height:1px;background:#aaa"></div>
<div class="a" style="left:758.9px;top:607px;width:1px;height:98.39999999999998px;background:#aaa"></div>
<div class="t" style="left:518.6px;width:70px;text-align:center;top:614.2px;line-height:8px;font-size:7px;color:#222;font-family:'Liberation Serif',serif;letter-spacing:-0.35px"><i style="width:6.2px;font-size:9.5px">荷</i><i style="width:6.2px;font-size:9.5px">　</i><i style="width:6.2px;font-size:9.5px">重</i><i style="width:6.2px;font-size:9.5px">　</i><i style="width:6.2px;font-size:9.5px">状</i><i style="width:6.2px;font-size:9.5px">　</i><i style="width:6.2px;font-size:9.5px">態</i></div>
<div class="t" style="left:588.0px;width:80px;text-align:center;top:608.1px;line-height:8px;font-size:7px;color:#222;font-family:'Liberation Serif',serif;letter-spacing:-0.35px"><i style="width:6.2px;font-size:9.5px">フ</i><i style="width:6.2px;font-size:9.5px">ー</i><i style="width:6.2px;font-size:9.5px">チ</i><i style="width:6.2px;font-size:9.5px">ン</i><i style="width:6.2px;font-size:9.5px">グ</i><i style="width:6.2px;font-size:9.5px">中</i><i style="width:6.2px;font-size:9.5px">心</i><i style="width:6.2px;font-size:9.5px">の</i><i style="width:6.2px;font-size:9.5px">作</i><i style="width:6.2px;font-size:9.5px">用</i><i style="width:6.2px;font-size:9.5px">力</i></div>
<div class="t" style="left:589.5px;width:40px;text-align:center;top:620.3px;line-height:8px;font-size:7px;color:#222;font-family:'Liberation Serif',serif;letter-spacing:-0.35px">M<sub style="font-size:3px">x</sub><i style="width:6.2px;font-size:9.5px">　</i>(kN.m)</div>
<div class="t" style="left:626.9px;width:40px;text-align:center;top:620.3px;line-height:8px;font-size:7px;color:#222;font-family:'Liberation Serif',serif;letter-spacing:-0.35px">V<sub style="font-size:3px">x</sub><i style="width:6.2px;font-size:9.5px">　</i>(kN)</div>
<div class="t" style="left:665.5px;width:80px;text-align:center;top:608.1px;line-height:8px;font-size:7px;color:#222;font-family:'Liberation Serif',serif;letter-spacing:-0.35px"><i style="width:6.2px;font-size:9.5px">偏</i><i style="width:6.2px;font-size:9.5px">心</i><i style="width:6.2px;font-size:9.5px">量</i>e<sub style="font-size:3px">x</sub>(m)</div>
<div class="t" style="left:672.0px;width:30px;text-align:center;top:620.3px;line-height:8px;font-size:7px;color:#222;font-family:'Liberation Serif',serif;letter-spacing:-0.35px"><i style="width:6.2px;font-size:9.5px">計</i><i style="width:6.2px;font-size:9.5px">算</i><i style="width:6.2px;font-size:9.5px">値</i></div>
<div class="t" style="left:710.0px;width:30px;text-align:center;top:620.3px;line-height:8px;font-size:7px;color:#222;font-family:'Liberation Serif',serif;letter-spacing:-0.35px"><i style="width:6.2px;font-size:9.5px">制</i><i style="width:6.2px;font-size:9.5px">限</i><i style="width:6.2px;font-size:9.5px">値</i></div>
<div class="t" style="left:746.0px;width:12px;text-align:center;top:610.0px;line-height:8px;font-size:7px;color:#222;font-family:'Liberation Serif',serif;letter-spacing:-0.35px"><i style="width:6.2px;font-size:9.5px">判</i></div>
<div class="t" style="left:746.0px;width:12px;text-align:center;top:618.5px;line-height:8px;font-size:7px;color:#222;font-family:'Liberation Serif',serif;letter-spacing:-0.35px"><i style="width:6.2px;font-size:9.5px">定</i></div>
<div class="t" style="left:518.6px;top:632.9px;line-height:8px;font-size:7px;color:#222;font-family:'Liberation Serif',serif;letter-spacing:-0.35px">D(<i style="width:6.2px;font-size:9.5px">低</i><i style="width:6.2px;font-size:9.5px">水</i><i style="width:6.2px;font-size:9.5px">位</i>)</div>
<div class="t" style="left:583.3px;width:40px;text-align:right;top:632.9px;line-height:8px;font-size:7px;color:#222;font-family:'Liberation Serif',serif;letter-spacing:-0.35px">-8683.190</div>
<div class="t" style="left:621.4px;width:40px;text-align:right;top:632.9px;line-height:8px;font-size:7px;color:#222;font-family:'Liberation Serif',serif;letter-spacing:-0.35px">33181.088</div>
<div class="t" style="left:669px;width:40px;text-align:right;top:632.9px;line-height:8px;font-size:7px;color:#222;font-family:'Liberation Serif',serif;letter-spacing:-0.35px">-0.262 &#x2264;</div>
<div class="t" style="left:709px;width:30px;text-align:right;top:632.9px;line-height:8px;font-size:7px;color:#222;font-family:'Liberation Serif',serif;letter-spacing:-0.35px">2.733</div>
<div class="t" style="left:746.0px;width:12px;text-align:center;top:632.9px;line-height:8px;font-size:7px;color:#222;font-family:'Liberation Serif',serif;letter-spacing:-0.35px"><b style="display:inline-block;width:6px;height:6px;border:0.7px solid #555;border-radius:50%;vertical-align:middle"></b></div>
<div class="t" style="left:518.6px;top:645.1px;line-height:8px;font-size:7px;color:#222;font-family:'Liberation Serif',serif;letter-spacing:-0.35px">D(<i style="width:6.2px;font-size:9.5px">高</i><i style="width:6.2px;font-size:9.5px">水</i><i style="width:6.2px;font-size:9.5px">位</i>)</div>
<div class="t" style="left:583.3px;width:40px;text-align:right;top:645.15px;line-height:8px;font-size:7px;color:#222;font-family:'Liberation Serif',serif;letter-spacing:-0.35px">-7845.160</div>
<div class="t" style="left:621.4px;width:40px;text-align:right;top:645.15px;line-height:8px;font-size:7px;color:#222;font-family:'Liberation Serif',serif;letter-spacing:-0.35px">32512.723</div>
<div class="t" style="left:669px;width:40px;text-align:right;top:645.15px;line-height:8px;font-size:7px;color:#222;font-family:'Liberation Serif',serif;letter-spacing:-0.35px">-0.241 &#x2264;</div>
<div class="t" style="left:709px;width:30px;text-align:right;top:645.15px;line-height:8px;font-size:7px;color:#222;font-family:'Liberation Serif',serif;letter-spacing:-0.35px">2.733</div>
<div class="t" style="left:746.0px;width:12px;text-align:center;top:645.1px;line-height:8px;font-size:7px;color:#222;font-family:'Liberation Serif',serif;letter-spacing:-0.35px"><b style="display:inline-block;width:6px;height:6px;border:0.7px solid #555;border-radius:50%;vertical-align:middle"></b></div>
<div class="t" style="left:518.6px;top:657.4px;line-height:8px;font-size:7px;color:#222;font-family:'Liberation Serif',serif;letter-spacing:-0.35px">D+L(<i style="width:6.2px;font-size:9.5px">低</i><i style="width:6.2px;font-size:9.5px">水</i><i style="width:6.2px;font-size:9.5px">位</i>)</div>
<div class="t" style="left:583.3px;width:40px;text-align:right;top:657.4px;line-height:8px;font-size:7px;color:#222;font-family:'Liberation Serif',serif;letter-spacing:-0.35px">-7114.992</div>
<div class="t" style="left:621.4px;width:40px;text-align:right;top:657.4px;line-height:8px;font-size:7px;color:#222;font-family:'Liberation Serif',serif;letter-spacing:-0.35px">35278.980</div>
<div class="t" style="left:669px;width:40px;text-align:right;top:657.4px;line-height:8px;font-size:7px;color:#222;font-family:'Liberation Serif',serif;letter-spacing:-0.35px">-0.202 &#x2264;</div>
<div class="t" style="left:709px;width:30px;text-align:right;top:657.4px;line-height:8px;font-size:7px;color:#222;font-family:'Liberation Serif',serif;letter-spacing:-0.35px">2.733</div>
<div class="t" style="left:746.0px;width:12px;text-align:center;top:657.4px;line-height:8px;font-size:7px;color:#222;font-family:'Liberation Serif',serif;letter-spacing:-0.35px"><b style="display:inline-block;width:6px;height:6px;border:0.7px solid #555;border-radius:50%;vertical-align:middle"></b></div>
<div class="t" style="left:518.6px;top:669.6px;line-height:8px;font-size:7px;color:#222;font-family:'Liberation Serif',serif;letter-spacing:-0.35px">D+L(<i style="width:6.2px;font-size:9.5px">高</i><i style="width:6.2px;font-size:9.5px">水</i><i style="width:6.2px;font-size:9.5px">位</i>)</div>
<div class="t" style="left:583.3px;width:40px;text-align:right;top:669.5999999999999px;line-height:8px;font-size:7px;color:#222;font-family:'Liberation Serif',serif;letter-spacing:-0.35px">-6276.962</div>
<div class="t" style="left:621.4px;width:40px;text-align:right;top:669.5999999999999px;line-height:8px;font-size:7px;color:#222;font-family:'Liberation Serif',serif;letter-spacing:-0.35px">34610.648</div>
<div class="t" style="left:669px;width:40px;text-align:right;top:669.5999999999999px;line-height:8px;font-size:7px;color:#222;font-family:'Liberation Serif',serif;letter-spacing:-0.35px">-0.181 &#x2264;</div>
<div class="t" style="left:709px;width:30px;text-align:right;top:669.5999999999999px;line-height:8px;font-size:7px;color:#222;font-family:'Liberation Serif',serif;letter-spacing:-0.35px">2.733</div>
<div class="t" style="left:746.0px;width:12px;text-align:center;top:669.6px;line-height:8px;font-size:7px;color:#222;font-family:'Liberation Serif',serif;letter-spacing:-0.35px"><b style="display:inline-block;width:6px;height:6px;border:0.7px solid #555;border-radius:50%;vertical-align:middle"></b></div>
<div class="t" style="left:518.6px;top:681.8px;line-height:8px;font-size:7px;color:#222;font-family:'Liberation Serif',serif;letter-spacing:-0.35px">D+EQ(<i style="width:6.2px;font-size:9.5px">低</i><i style="width:6.2px;font-size:9.5px">水</i><i style="width:6.2px;font-size:9.5px">位</i>)</div>
<div class="t" style="left:583.3px;width:40px;text-align:right;top:681.8499999999999px;line-height:8px;font-size:7px;color:#222;font-family:'Liberation Serif',serif;letter-spacing:-0.35px">45562.469</div>
<div class="t" style="left:621.4px;width:40px;text-align:right;top:681.8499999999999px;line-height:8px;font-size:7px;color:#222;font-family:'Liberation Serif',serif;letter-spacing:-0.35px">32521.108</div>
<div class="t" style="left:669px;width:40px;text-align:right;top:681.8499999999999px;line-height:8px;font-size:7px;color:#222;font-family:'Liberation Serif',serif;letter-spacing:-0.35px">1.401 &#x2264;</div>
<div class="t" style="left:709px;width:30px;text-align:right;top:681.8499999999999px;line-height:8px;font-size:7px;color:#222;font-family:'Liberation Serif',serif;letter-spacing:-0.35px">2.733</div>
<div class="t" style="left:746.0px;width:12px;text-align:center;top:681.8px;line-height:8px;font-size:7px;color:#222;font-family:'Liberation Serif',serif;letter-spacing:-0.35px"><b style="display:inline-block;width:6px;height:6px;border:0.7px solid #555;border-radius:50%;vertical-align:middle"></b></div>
<div class="t" style="left:518.6px;top:694.1px;line-height:8px;font-size:7px;color:#222;font-family:'Liberation Serif',serif;letter-spacing:-0.35px">D+EQ(<i style="width:6.2px;font-size:9.5px">高</i><i style="width:6.2px;font-size:9.5px">水</i><i style="width:6.2px;font-size:9.5px">位</i>)</div>
<div class="t" style="left:583.3px;width:40px;text-align:right;top:694.0999999999999px;line-height:8px;font-size:7px;color:#222;font-family:'Liberation Serif',serif;letter-spacing:-0.35px">46475.402</div>
<div class="t" style="left:621.4px;width:40px;text-align:right;top:694.0999999999999px;line-height:8px;font-size:7px;color:#222;font-family:'Liberation Serif',serif;letter-spacing:-0.35px">31534.833</div>
<div class="t" style="left:669px;width:40px;text-align:right;top:694.0999999999999px;line-height:8px;font-size:7px;color:#222;font-family:'Liberation Serif',serif;letter-spacing:-0.35px">1.460 &#x2264;</div>
<div class="t" style="left:709px;width:30px;text-align:right;top:694.0999999999999px;line-height:8px;font-size:7px;color:#222;font-family:'Liberation Serif',serif;letter-spacing:-0.35px">2.733</div>
<div class="t" style="left:746.0px;width:12px;text-align:center;top:694.1px;line-height:8px;font-size:7px;color:#222;font-family:'Liberation Serif',serif;letter-spacing:-0.35px"><b style="display:inline-block;width:6px;height:6px;border:0.7px solid #555;border-radius:50%;vertical-align:middle"></b></div>
<div class="a" style="left:160px;top:395px;width:332px;height:293px;background:#fff;border:1px solid #8a8a8a;box-shadow:1px 2px 7px rgba(0,0,0,.45)"></div>
<svg width="850" height="713" viewBox="0 0 850 713">
<rect x="163.5" y="398" width="7.5" height="6" rx="1" fill="#222"/><rect x="164.5" y="399" width="5.5" height="3.8" fill="#7fb5e8"/>
<rect x="165" y="404" width="1.3" height="1.8" fill="#555"/><rect x="167" y="404.5" width="4.5" height="2.2" rx="1" fill="#1a9a2a"/>
<path d="M417 402.5 h8" stroke="#333" stroke-width="1"/>
<rect x="445.5" y="398.5" width="7" height="7" fill="none" stroke="#333" stroke-width="1"/>
<path d="M473.5 398.5 l7.5 7.5 M481 398.5 l-7.5 7.5" stroke="#333" stroke-width="1"/>
</svg>
<div class="t" style="left:174.8px;top:397.3px;line-height:11px;font-size:8px;color:#555;"><i style="width:5.6px;font-size:9px">リ</i><i style="width:5.6px;font-size:9px">ン</i><i style="width:5.6px;font-size:9px">ク</i><i style="width:7.3px;font-size:9px">情</i><i style="width:7.3px;font-size:9px">報</i></div>
<div class="a" style="left:161px;top:410px;width:330px;height:14px;background:#f0f0f0"></div>
<div class="a" style="left:161px;top:410px;width:38px;height:15px;background:#fff;border-right:1px solid #d9d9d9"></div>
<div class="a" style="left:199px;top:412px;width:25px;height:12px;background:#f0f0f0;border:1px solid #d9d9d9;border-left:none"></div>
<div class="t" style="left:164px;top:412.0px;line-height:11px;font-size:8px;color:#333;"><i style="width:5.6px;font-size:9px">リ</i><i style="width:5.6px;font-size:9px">ン</i><i style="width:5.6px;font-size:9px">ク</i><i style="width:7px;font-size:9px">情</i><i style="width:7px;font-size:9px">報</i></div>
<div class="t" style="left:202px;top:412.8px;line-height:11px;font-size:8px;color:#333;"><i style="width:7.5px;font-size:9px">座</i><i style="width:7.5px;font-size:9px">標</i></div>
<div class="a" style="left:199px;top:423.5px;width:292px;height:1px;background:#d9d9d9"></div>
<div class="t" style="left:173.4px;top:437.5px;line-height:11px;font-size:8px;color:#444;"><i style="width:7.6px;font-size:9px">名</i><i style="width:7.6px;font-size:9px">称</i></div>
<div class="a" style="left:192.4px;top:433.5px;width:265px;height:12.5px;background:#fff;border:1px solid #7a7a7a"></div>
<div class="t" style="left:195px;top:434.1px;line-height:11px;font-size:8px;color:#333;"><i style="width:5px;font-size:9px">リ</i><i style="width:5px;font-size:9px">ン</i><i style="width:5px;font-size:9px">ク</i>2</div>
<div class="a" style="left:461.9px;top:428px;width:18.3px;height:18.5px;background:#e1e1e1;border:1px solid #adadad"></div>
<svg width="850" height="713" viewBox="0 0 850 713"><path d="M468.5 432 h5 v3.5 h3.5 v5 h-3.5 v3.5 h-5 v-3.5 h-3.5 v-5 h3.5z" fill="#3ac23a" stroke="#1a8a1a" stroke-width=".8"/></svg>
<div class="t" style="left:173px;top:455.1px;line-height:11px;font-size:8px;color:#444;"><i style="width:5.6px;font-size:9px">リ</i><i style="width:5.6px;font-size:9px">ン</i><i style="width:5.6px;font-size:9px">ク</i><i style="width:5.6px;font-size:9px">す</i><i style="width:5.6px;font-size:9px">る</i><i style="width:7px;font-size:9px">構</i><i style="width:7px;font-size:9px">造</i><i style="width:7px;font-size:9px">物</i></div>
<div class="a" style="left:227px;top:453.5px;width:90px;height:13.5px;background:#e5e5e5;border:1px solid #acacac"></div>
<div class="t" style="left:230px;top:455.3px;line-height:10px;font-size:7px;color:#222;">Abutment</div>
<svg width="850" height="713" viewBox="0 0 850 713"><path d="M307.5 458.5 l3 3 l3 -3" stroke="#444" stroke-width=".9" fill="none"/></svg>
<div class="a" style="left:174px;top:477px;width:307px;height:172px;background:#fff;border:1px solid #a0a0a0"></div>
<div class="a" style="left:175px;top:478px;width:13px;height:170px;background:#f0f0f0"></div>
<div class="a" style="left:188px;top:478px;width:249.6px;height:15.4px;background:#efefef"></div>
<div class="t" style="left:176.5px;top:480.5px;line-height:10px;font-size:7px;color:#222;">No</div>
<div class="t" style="left:272.8px;width:80px;text-align:center;top:480.0px;line-height:11px;font-size:8px;color:#333;"><i style="width:5.6px;font-size:9px">リ</i><i style="width:5.6px;font-size:9px">ン</i><i style="width:5.6px;font-size:9px">ク</i><i style="width:7.3px;font-size:9px">情</i><i style="width:7.3px;font-size:9px">報</i></div>
<div class="a" style="left:175px;top:508.46999999999997px;width:306px;height:1px;background:#e6e6e6"></div>
<div class="t" style="left:177.5px;top:496.2px;line-height:10px;font-size:7px;color:#222;">1</div>
<div class="a" style="left:437.6px;top:495.2px;width:26.1px;height:13px;background:#e1e1e1;border:1px solid #adadad"></div>
<div class="t" style="left:435.6px;width:30px;text-align:center;top:496.2px;line-height:11px;font-size:8px;color:#222;"><i style="width:7.5px;font-size:9px">表</i><i style="width:7.5px;font-size:9px">示</i></div>
<div class="a" style="left:466.4px;top:495.2px;width:13.3px;height:13px;background:#e1e1e1;border:1px solid #adadad"></div>
<div class="a" style="left:468.5px;top:499.9px;width:9.5px;height:3.5px;background:#e8102a"></div>
<div class="a" style="left:175px;top:524.04px;width:306px;height:1px;background:#e6e6e6"></div>
<div class="t" style="left:177.5px;top:511.8px;line-height:10px;font-size:7px;color:#222;">2</div>
<div class="a" style="left:437.6px;top:510.77px;width:26.1px;height:13px;background:#e1e1e1;border:1px solid #adadad"></div>
<div class="t" style="left:435.6px;width:30px;text-align:center;top:511.8px;line-height:11px;font-size:8px;color:#222;"><i style="width:7.5px;font-size:9px">表</i><i style="width:7.5px;font-size:9px">示</i></div>
<div class="a" style="left:466.4px;top:510.77px;width:13.3px;height:13px;background:#e1e1e1;border:1px solid #adadad"></div>
<div class="a" style="left:468.5px;top:515.47px;width:9.5px;height:3.5px;background:#e8102a"></div>
<div class="a" style="left:175px;top:539.61px;width:306px;height:1px;background:#e6e6e6"></div>
<div class="t" style="left:177.5px;top:527.3px;line-height:10px;font-size:7px;color:#222;">3</div>
<div class="a" style="left:437.6px;top:526.3399999999999px;width:26.1px;height:13px;background:#cccccc;border:1px solid #c4c4c4"></div>
<div class="t" style="left:435.6px;width:30px;text-align:center;top:527.3px;line-height:11px;font-size:8px;color:#a0a0a0;"><i style="width:7.5px;font-size:9px">表</i><i style="width:7.5px;font-size:9px">示</i></div>
<div class="a" style="left:466.4px;top:526.3399999999999px;width:13.3px;height:13px;background:#cccccc;border:1px solid #c4c4c4"></div>
<div class="a" style="left:468.5px;top:531.04px;width:9.5px;height:3.5px;background:#d4d4d4"></div>
<div class="a" style="left:175px;top:555.18px;width:306px;height:1px;background:#e6e6e6"></div>
<div class="a" style="left:188px;top:540.61px;width:249.6px;height:14.569999999999936px;background:#a0a0a0"></div>
<div class="t" style="left:177.5px;top:542.9px;line-height:10px;font-size:7px;color:#222;">4</div>
<div class="a" style="left:437.6px;top:541.91px;width:26.1px;height:13px;background:#cccccc;border:1px solid #c4c4c4"></div>
<div class="t" style="left:435.6px;width:30px;text-align:center;top:542.9px;line-height:11px;font-size:8px;color:#a0a0a0;"><i style="width:7.5px;font-size:9px">表</i><i style="width:7.5px;font-size:9px">示</i></div>
<div class="a" style="left:466.4px;top:541.91px;width:13.3px;height:13px;background:#cccccc;border:1px solid #c4c4c4"></div>
<div class="a" style="left:468.5px;top:546.61px;width:9.5px;height:3.5px;background:#d4d4d4"></div>
<div class="a" style="left:175px;top:570.75px;width:306px;height:1px;background:#e6e6e6"></div>
<div class="a" style="left:188px;top:556.18px;width:249.6px;height:14.57000000000005px;background:#a0a0a0"></div>
<div class="t" style="left:177.5px;top:558.5px;line-height:10px;font-size:7px;color:#222;">5</div>
<div class="a" style="left:437.6px;top:557.4799999999999px;width:26.1px;height:13px;background:#cccccc;border:1px solid #c4c4c4"></div>
<div class="t" style="left:435.6px;width:30px;text-align:center;top:558.5px;line-height:11px;font-size:8px;color:#a0a0a0;"><i style="width:7.5px;font-size:9px">表</i><i style="width:7.5px;font-size:9px">示</i></div>
<div class="a" style="left:466.4px;top:557.4799999999999px;width:13.3px;height:13px;background:#cccccc;border:1px solid #c4c4c4"></div>
<div class="a" style="left:468.5px;top:562.18px;width:9.5px;height:3.5px;background:#d4d4d4"></div>
<div class="a" style="left:175px;top:586.3199999999999px;width:306px;height:1px;background:#e6e6e6"></div>
<div class="a" style="left:188px;top:571.75px;width:249.6px;height:14.569999999999936px;background:#a0a0a0"></div>
<div class="t" style="left:177.5px;top:574.0px;line-height:10px;font-size:7px;color:#222;">6</div>
<div class="a" style="left:437.6px;top:573.05px;width:26.1px;height:13px;background:#cccccc;border:1px solid #c4c4c4"></div>
<div class="t" style="left:435.6px;width:30px;text-align:center;top:574.0px;line-height:11px;font-size:8px;color:#a0a0a0;"><i style="width:7.5px;font-size:9px">表</i><i style="width:7.5px;font-size:9px">示</i></div>
<div class="a" style="left:466.4px;top:573.05px;width:13.3px;height:13px;background:#cccccc;border:1px solid #c4c4c4"></div>
<div class="a" style="left:468.5px;top:577.75px;width:9.5px;height:3.5px;background:#d4d4d4"></div>
<div class="a" style="left:175px;top:601.89px;width:306px;height:1px;background:#e6e6e6"></div>
<div class="a" style="left:188px;top:587.3199999999999px;width:249.6px;height:14.57000000000005px;background:#a0a0a0"></div>
<div class="t" style="left:177.5px;top:589.6px;line-height:10px;font-size:7px;color:#222;">7</div>
<div class="a" style="left:437.6px;top:588.6199999999999px;width:26.1px;height:13px;background:#cccccc;border:1px solid #c4c4c4"></div>
<div class="t" style="left:435.6px;width:30px;text-align:center;top:589.6px;line-height:11px;font-size:8px;color:#a0a0a0;"><i style="width:7.5px;font-size:9px">表</i><i style="width:7.5px;font-size:9px">示</i></div>
<div class="a" style="left:466.4px;top:588.6199999999999px;width:13.3px;height:13px;background:#cccccc;border:1px solid #c4c4c4"></div>
<div class="a" style="left:468.5px;top:593.3199999999999px;width:9.5px;height:3.5px;background:#d4d4d4"></div>
<div class="a" style="left:175px;top:617.46px;width:306px;height:1px;background:#e6e6e6"></div>
<div class="a" style="left:188px;top:602.89px;width:249.6px;height:14.57000000000005px;background:#a0a0a0"></div>
<div class="t" style="left:177.5px;top:605.2px;line-height:10px;font-size:7px;color:#222;">8</div>
<div class="a" style="left:437.6px;top:604.1899999999999px;width:26.1px;height:13px;background:#cccccc;border:1px solid #c4c4c4"></div>
<div class="t" style="left:435.6px;width:30px;text-align:center;top:605.2px;line-height:11px;font-size:8px;color:#a0a0a0;"><i style="width:7.5px;font-size:9px">表</i><i style="width:7.5px;font-size:9px">示</i></div>
<div class="a" style="left:466.4px;top:604.1899999999999px;width:13.3px;height:13px;background:#cccccc;border:1px solid #c4c4c4"></div>
<div class="a" style="left:468.5px;top:608.89px;width:9.5px;height:3.5px;background:#d4d4d4"></div>
<div class="a" style="left:175px;top:633.03px;width:306px;height:1px;background:#e6e6e6"></div>
<div class="a" style="left:188px;top:618.46px;width:249.6px;height:14.569999999999936px;background:#a0a0a0"></div>
<div class="t" style="left:177.5px;top:620.7px;line-height:10px;font-size:7px;color:#222;">9</div>
<div class="a" style="left:437.6px;top:619.76px;width:26.1px;height:13px;background:#cccccc;border:1px solid #c4c4c4"></div>
<div class="t" style="left:435.6px;width:30px;text-align:center;top:620.8px;line-height:11px;font-size:8px;color:#a0a0a0;"><i style="width:7.5px;font-size:9px">表</i><i style="width:7.5px;font-size:9px">示</i></div>
<div class="a" style="left:466.4px;top:619.76px;width:13.3px;height:13px;background:#cccccc;border:1px solid #c4c4c4"></div>
<div class="a" style="left:468.5px;top:624.46px;width:9.5px;height:3.5px;background:#d4d4d4"></div>
<div class="a" style="left:175px;top:648.5999999999999px;width:306px;height:1px;background:#e6e6e6"></div>
<div class="a" style="left:188px;top:634.03px;width:249.6px;height:14.569999999999936px;background:#a0a0a0"></div>
<div class="t" style="left:176.5px;top:636.3px;line-height:10px;font-size:7px;color:#222;">10</div>
<div class="a" style="left:437.6px;top:635.3299999999999px;width:26.1px;height:13px;background:#cccccc;border:1px solid #c4c4c4"></div>
<div class="t" style="left:435.6px;width:30px;text-align:center;top:636.3px;line-height:11px;font-size:8px;color:#a0a0a0;"><i style="width:7.5px;font-size:9px">表</i><i style="width:7.5px;font-size:9px">示</i></div>
<div class="a" style="left:466.4px;top:635.3299999999999px;width:13.3px;height:13px;background:#cccccc;border:1px solid #c4c4c4"></div>
<div class="a" style="left:468.5px;top:640.03px;width:9.5px;height:3.5px;background:#d4d4d4"></div>
<div class="t" style="left:252.2px;width:120px;text-align:center;top:496.2px;line-height:10.2px;font-size:7.2px;color:#111;">D:&yen;Abutment1.pfa</div>
<div class="t" style="left:252.2px;width:120px;text-align:center;top:511.5px;line-height:10.2px;font-size:7.2px;color:#111;">D:&yen;Abutment1.txt</div>
<div class="a" style="left:161px;top:658px;width:330px;height:29px;background:#f0f0f0;border-top:1px solid #e3e3e3"></div>
<div class="a" style="left:343.2px;top:664.3px;width:45.0px;height:14px;background:#e1e1e1;border:1px solid #adadad"></div>
<div class="a" style="left:393.1px;top:664.3px;width:45.19999999999999px;height:14px;background:#e1e1e1;border:1px solid #adadad"></div>
<div class="a" style="left:443.6px;top:664.3px;width:45.19999999999999px;height:14px;background:#e1e1e1;border:1px solid #adadad"></div>
<div class="t" style="left:365.5px;top:665.8px;line-height:11px;font-size:8px;color:#222;"><i style="width:7.5px;font-size:9px">確</i><i style="width:7.5px;font-size:9px">定</i></div>
<div class="t" style="left:415.5px;top:665.8px;line-height:11px;font-size:8px;color:#222;"><i style="width:7.5px;font-size:9px">取</i><i style="width:7.5px;font-size:9px">消</i></div>
<div class="t" style="left:460.8px;top:666.3px;line-height:10px;font-size:7px;color:#333;"><i style="width:4.8px;font-size:8px">ヘ</i><i style="width:4.8px;font-size:8px">ル</i><i style="width:4.8px;font-size:8px">プ</i>(H)</div>
<svg width="850" height="713" viewBox="0 0 850 713">
<path d="M352.5 671 l3 3.5 l6 -7.5" stroke="#1a9a1a" stroke-width="2.2" fill="none"/>
<path d="M403.5 667 l7 8 M410.5 667 l-7 8" stroke="#c81818" stroke-width="2.3"/>
<text x="453.2" y="676.8" font-size="12.5" font-weight="bold" fill="#1a88c8" text-anchor="middle" font-family="Liberation Sans">?</text>
</svg>
<svg width="850" height="713" viewBox="0 0 850 713">
<path d="M354.1 501.2 L591.3 224" stroke="#4472c4" stroke-width="5.6"/>
<path d="M602.4 211.1 L597.8 229.5 L584.8 218.5z" fill="#4472c4" stroke="#4472c4" stroke-width=".8" stroke-linejoin="miter"/>
<path d="M351 516 L572 533.9" stroke="#4472c4" stroke-width="5.6"/>
<path d="M588.8 535.3 L571.2 542.4 L572.6 525.4z" fill="#4472c4" stroke="#4472c4" stroke-width=".8"/>
</svg>
</body></html>
